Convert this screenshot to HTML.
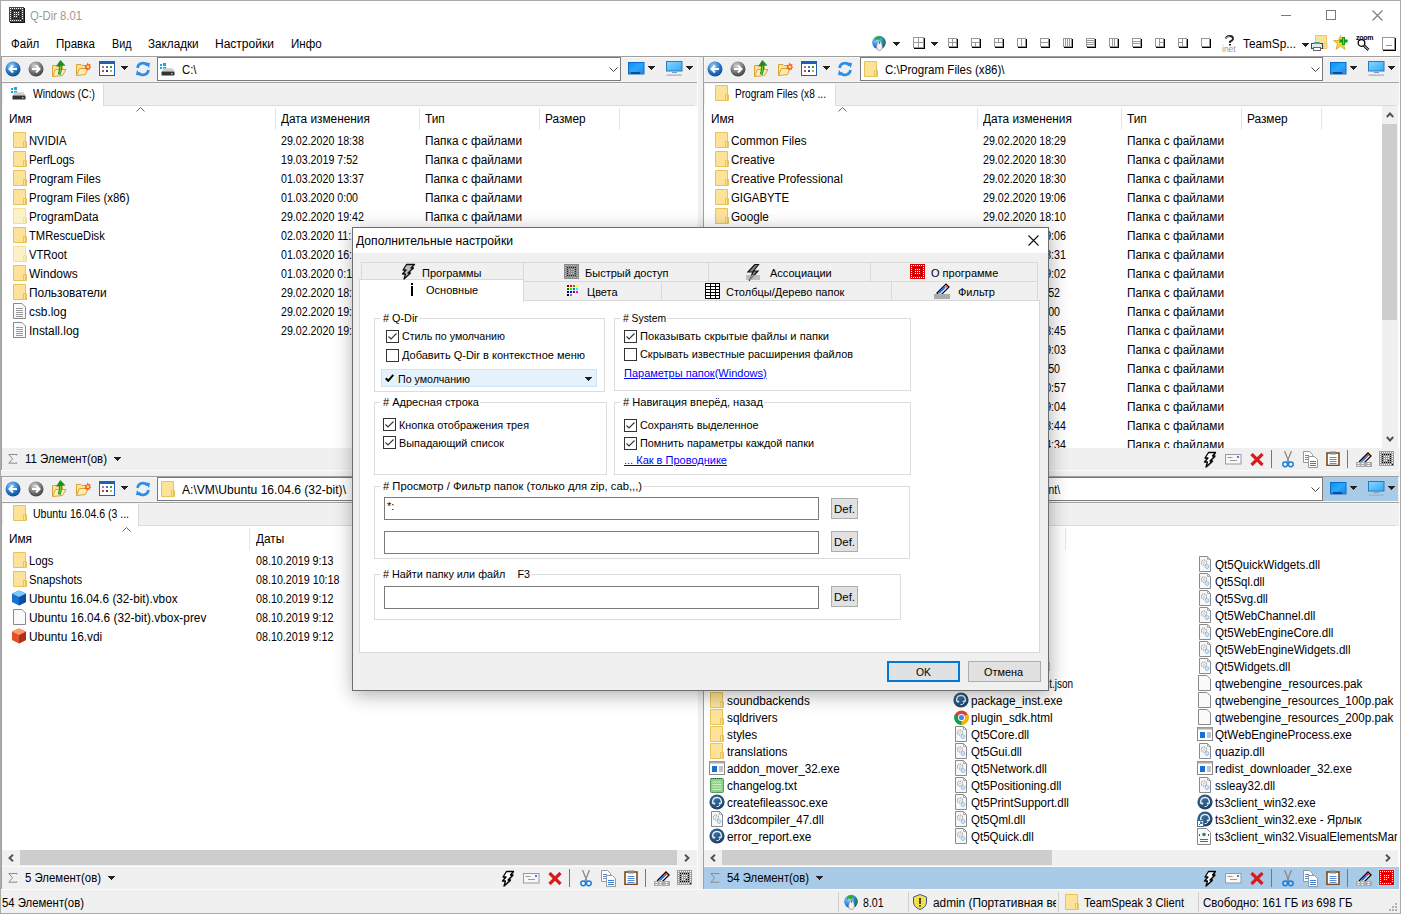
<!DOCTYPE html><html><head><meta charset="utf-8"><style>html,body{margin:0;padding:0;}body{width:1401px;height:914px;overflow:hidden;position:relative;background:#f0f0f0;font-family:"Liberation Sans",sans-serif;}body div,body svg{position:absolute;}.t{white-space:pre;}</style></head><body><div style="left:0px;top:0px;width:1401px;height:914px;background:#f0f0f0;"></div><div style="left:0px;top:0px;width:1401px;height:56px;background:#fff;"></div><div style="left:0px;top:0px;width:1401px;height:1px;background:#aaaaaa;"></div><div style="left:0px;top:0px;width:1px;height:914px;background:#aaaaaa;"></div><div style="left:1400px;top:0px;width:1px;height:914px;background:#aaaaaa;"></div><div style="left:0px;top:913px;width:1401px;height:1px;background:#aaaaaa;"></div><svg style="left:9px;top:7px" width="17" height="17" viewBox="0 0 17 17" shape-rendering="crispEdges"><rect x="1" y="1" width="15" height="15" fill="#111"/><rect x="0" y="0" width="15" height="15" fill="#ee0000"/><rect x="1" y="1" width="1" height="1" fill="#fff"/><rect x="3" y="1" width="1" height="1" fill="#fff"/><rect x="5" y="1" width="1" height="1" fill="#fff"/><rect x="7" y="1" width="1" height="1" fill="#fff"/><rect x="9" y="1" width="1" height="1" fill="#fff"/><rect x="11" y="1" width="1" height="1" fill="#fff"/><rect x="13" y="1" width="1" height="1" fill="#fff"/><rect x="1" y="3" width="1" height="1" fill="#fff"/><rect x="3" y="3" width="1" height="1" fill="#000"/><rect x="5" y="3" width="1" height="1" fill="#000"/><rect x="7" y="3" width="1" height="1" fill="#000"/><rect x="9" y="3" width="1" height="1" fill="#000"/><rect x="11" y="3" width="1" height="1" fill="#000"/><rect x="13" y="3" width="1" height="1" fill="#fff"/><rect x="1" y="5" width="1" height="1" fill="#fff"/><rect x="3" y="5" width="1" height="1" fill="#000"/><rect x="5" y="5" width="1" height="1" fill="#fff"/><rect x="7" y="5" width="1" height="1" fill="#fff"/><rect x="9" y="5" width="1" height="1" fill="#fff"/><rect x="11" y="5" width="1" height="1" fill="#000"/><rect x="13" y="5" width="1" height="1" fill="#fff"/><rect x="1" y="7" width="1" height="1" fill="#fff"/><rect x="3" y="7" width="1" height="1" fill="#000"/><rect x="5" y="7" width="1" height="1" fill="#fff"/><rect x="7" y="7" width="1" height="1" fill="#fff"/><rect x="9" y="7" width="1" height="1" fill="#fff"/><rect x="11" y="7" width="1" height="1" fill="#000"/><rect x="13" y="7" width="1" height="1" fill="#fff"/><rect x="1" y="9" width="1" height="1" fill="#fff"/><rect x="3" y="9" width="1" height="1" fill="#000"/><rect x="5" y="9" width="1" height="1" fill="#fff"/><rect x="7" y="9" width="1" height="1" fill="#fff"/><rect x="9" y="9" width="1" height="1" fill="#000"/><rect x="11" y="9" width="1" height="1" fill="#000"/><rect x="13" y="9" width="1" height="1" fill="#fff"/><rect x="1" y="11" width="1" height="1" fill="#fff"/><rect x="3" y="11" width="1" height="1" fill="#000"/><rect x="5" y="11" width="1" height="1" fill="#000"/><rect x="7" y="11" width="1" height="1" fill="#000"/><rect x="9" y="11" width="1" height="1" fill="#000"/><rect x="11" y="11" width="1" height="1" fill="#000"/><rect x="13" y="11" width="1" height="1" fill="#fff"/><rect x="1" y="13" width="1" height="1" fill="#fff"/><rect x="3" y="13" width="1" height="1" fill="#fff"/><rect x="5" y="13" width="1" height="1" fill="#fff"/><rect x="7" y="13" width="1" height="1" fill="#fff"/><rect x="9" y="13" width="1" height="1" fill="#fff"/><rect x="11" y="13" width="1" height="1" fill="#fff"/><rect x="13" y="13" width="1" height="1" fill="#000"/></svg><div class="t" style="left:30px;top:7.84px;font-size:12px;line-height:16px;color:#9a9a9a;transform:scaleX(0.9393);transform-origin:0 0;">Q-Dir 8.01</div><div style="left:1281px;top:15px;width:10px;height:1px;background:#7a7a7a;"></div><div style="left:1326px;top:10px;width:10px;height:10px;border:1px solid #7a7a7a;box-sizing:border-box;"></div><svg style="left:1372px;top:10px" width="11" height="11" viewBox="0 0 11 11"><path d="M0.5 0.5L10.5 10.5M10.5 0.5L0.5 10.5" stroke="#7a7a7a" stroke-width="1.1"/></svg><div class="t" style="left:11px;top:35.84px;font-size:12px;line-height:16px;color:#000;transform:scaleX(0.9588);transform-origin:0 0;">Файл</div><div class="t" style="left:56px;top:35.84px;font-size:12px;line-height:16px;color:#000;transform:scaleX(0.9594);transform-origin:0 0;">Правка</div><div class="t" style="left:112px;top:35.84px;font-size:12px;line-height:16px;color:#000;transform:scaleX(0.8978);transform-origin:0 0;">Вид</div><div class="t" style="left:148px;top:35.84px;font-size:12px;line-height:16px;color:#000;transform:scaleX(0.9742);transform-origin:0 0;">Закладки</div><div class="t" style="left:215px;top:35.84px;font-size:12px;line-height:16px;color:#000;transform:scaleX(1.0010);transform-origin:0 0;">Настройки</div><div class="t" style="left:291px;top:35.84px;font-size:12px;line-height:16px;color:#000;transform:scaleX(0.9650);transform-origin:0 0;">Инфо</div><svg style="left:872px;top:35px" width="15" height="16" viewBox="0 0 15 16"><defs><radialGradient id="globeg" cx="0.35" cy="0.3" r="0.75"><stop offset="0" stop-color="#9ad8ff"/><stop offset="0.7" stop-color="#1a78d8"/><stop offset="1" stop-color="#0a4a9a"/></radialGradient></defs><circle cx="7" cy="7.5" r="6.8" fill="url(#globeg)"/><path d="M2.5 3.5Q5 0.8 8.5 1.2L9.5 3L7 5L4.5 4.5L3 6Z" fill="#2fa82f"/><path d="M10.5 2.5Q13.5 4.5 13.6 8L12 10L10.5 7.5L11.5 5Z" fill="#1f8f2a"/><path d="M5.5 7.5Q7.5 5.5 9.5 7.5L10.5 12Q10 15.5 7.5 15.5Q4.5 15.5 4.5 12Z" fill="#f2f2f2" stroke="#8a8a8a" stroke-width="0.7"/><path d="M7.5 6.5V9" stroke="#6a6aa0" stroke-width="1"/></svg><svg style="left:893px;top:42px" width="7" height="4" viewBox="0 0 7 4" shape-rendering="crispEdges"><rect x="0" y="0" width="7" height="1" fill="#222"/><rect x="1" y="1" width="5" height="1" fill="#222"/><rect x="2" y="2" width="3" height="1" fill="#222"/><rect x="3" y="3" width="1" height="1" fill="#222"/></svg><svg style="left:913px;top:37px" width="12" height="12" viewBox="0 0 12 12" shape-rendering="crispEdges"><rect x="1" y="1" width="11" height="11" fill="#000"/><rect x="0" y="0" width="11" height="11" fill="#999"/><rect x="1" y="1" width="9" height="9" fill="#fff"/><rect x="5" y="0" width="1" height="11" fill="#999"/><rect x="0" y="5" width="11" height="1" fill="#999"/></svg><svg style="left:931px;top:42px" width="7" height="4" viewBox="0 0 7 4" shape-rendering="crispEdges"><rect x="0" y="0" width="7" height="1" fill="#222"/><rect x="1" y="1" width="5" height="1" fill="#222"/><rect x="2" y="2" width="3" height="1" fill="#222"/><rect x="3" y="3" width="1" height="1" fill="#222"/></svg><svg style="left:948px;top:38px" width="10" height="10" viewBox="0 0 10 10" shape-rendering="crispEdges"><rect x="1" y="1" width="9" height="9" fill="#000"/><rect x="0" y="0" width="9" height="9" fill="#999"/><rect x="1" y="1" width="7" height="7" fill="#fff"/><rect x="4" y="0" width="1" height="9" fill="#999"/><rect x="0" y="4" width="9" height="1" fill="#999"/></svg><svg style="left:971px;top:38px" width="10" height="10" viewBox="0 0 10 10" shape-rendering="crispEdges"><rect x="1" y="1" width="9" height="9" fill="#000"/><rect x="0" y="0" width="9" height="9" fill="#999"/><rect x="1" y="1" width="7" height="7" fill="#fff"/><rect x="0" y="4" width="9" height="1" fill="#999"/><rect x="4" y="4" width="1" height="5" fill="#999"/></svg><svg style="left:994px;top:38px" width="10" height="10" viewBox="0 0 10 10" shape-rendering="crispEdges"><rect x="1" y="1" width="9" height="9" fill="#000"/><rect x="0" y="0" width="9" height="9" fill="#999"/><rect x="1" y="1" width="7" height="7" fill="#fff"/><rect x="0" y="4" width="9" height="1" fill="#999"/><rect x="4" y="0" width="1" height="5" fill="#999"/></svg><svg style="left:1017px;top:38px" width="10" height="10" viewBox="0 0 10 10" shape-rendering="crispEdges"><rect x="1" y="1" width="9" height="9" fill="#000"/><rect x="0" y="0" width="9" height="9" fill="#999"/><rect x="1" y="1" width="7" height="7" fill="#fff"/><rect x="4" y="0" width="1" height="9" fill="#999"/></svg><svg style="left:1040px;top:38px" width="10" height="10" viewBox="0 0 10 10" shape-rendering="crispEdges"><rect x="1" y="1" width="9" height="9" fill="#000"/><rect x="0" y="0" width="9" height="9" fill="#999"/><rect x="1" y="1" width="7" height="7" fill="#fff"/><rect x="0" y="4" width="9" height="1" fill="#999"/></svg><svg style="left:1063px;top:38px" width="10" height="10" viewBox="0 0 10 10" shape-rendering="crispEdges"><rect x="1" y="1" width="9" height="9" fill="#000"/><rect x="0" y="0" width="9" height="9" fill="#999"/><rect x="1" y="1" width="7" height="7" fill="#fff"/><rect x="2" y="0" width="1" height="9" fill="#999"/><rect x="4" y="0" width="1" height="9" fill="#999"/><rect x="6" y="0" width="1" height="9" fill="#999"/></svg><svg style="left:1086px;top:38px" width="10" height="10" viewBox="0 0 10 10" shape-rendering="crispEdges"><rect x="1" y="1" width="9" height="9" fill="#000"/><rect x="0" y="0" width="9" height="9" fill="#999"/><rect x="1" y="1" width="7" height="7" fill="#fff"/><rect x="0" y="2" width="9" height="1" fill="#999"/><rect x="0" y="4" width="9" height="1" fill="#999"/><rect x="0" y="6" width="9" height="1" fill="#999"/></svg><svg style="left:1109px;top:38px" width="10" height="10" viewBox="0 0 10 10" shape-rendering="crispEdges"><rect x="1" y="1" width="9" height="9" fill="#000"/><rect x="0" y="0" width="9" height="9" fill="#999"/><rect x="1" y="1" width="7" height="7" fill="#fff"/><rect x="3" y="0" width="1" height="9" fill="#999"/><rect x="5" y="0" width="1" height="9" fill="#999"/></svg><svg style="left:1132px;top:38px" width="10" height="10" viewBox="0 0 10 10" shape-rendering="crispEdges"><rect x="1" y="1" width="9" height="9" fill="#000"/><rect x="0" y="0" width="9" height="9" fill="#999"/><rect x="1" y="1" width="7" height="7" fill="#fff"/><rect x="0" y="3" width="9" height="1" fill="#999"/><rect x="0" y="5" width="9" height="1" fill="#999"/></svg><svg style="left:1155px;top:38px" width="10" height="10" viewBox="0 0 10 10" shape-rendering="crispEdges"><rect x="1" y="1" width="9" height="9" fill="#000"/><rect x="0" y="0" width="9" height="9" fill="#999"/><rect x="1" y="1" width="7" height="7" fill="#fff"/><rect x="4" y="0" width="1" height="9" fill="#999"/><rect x="4" y="4" width="5" height="1" fill="#999"/></svg><svg style="left:1178px;top:38px" width="10" height="10" viewBox="0 0 10 10" shape-rendering="crispEdges"><rect x="1" y="1" width="9" height="9" fill="#000"/><rect x="0" y="0" width="9" height="9" fill="#999"/><rect x="1" y="1" width="7" height="7" fill="#fff"/><rect x="4" y="0" width="1" height="9" fill="#999"/><rect x="0" y="4" width="5" height="1" fill="#999"/></svg><svg style="left:1201px;top:38px" width="10" height="10" viewBox="0 0 10 10" shape-rendering="crispEdges"><rect x="1" y="1" width="9" height="9" fill="#000"/><rect x="0" y="0" width="9" height="9" fill="#999"/><rect x="1" y="1" width="7" height="7" fill="#fff"/></svg><svg style="left:1221px;top:35px" width="18" height="17" viewBox="0 0 18 17"><path d="M5 3.5Q5 1 8.5 1Q12 1 12 3.5Q12 5.5 9 6.5V8" stroke="#222" stroke-width="1.8" fill="none"/><path d="M5.5 3Q6 1.5 8.5 1.5" stroke="#aaa" stroke-width="1.2" fill="none"/><rect x="8" y="9" width="2" height="1.5" fill="#222"/><text x="1" y="16.5" font-size="8.5" fill="#999" font-family="Liberation Sans">inet</text></svg><div class="t" style="left:1243px;top:35.84px;font-size:12px;line-height:16px;color:#000;transform:scaleX(0.9809);transform-origin:0 0;">TeamSp...</div><svg style="left:1302px;top:43px" width="7" height="4" viewBox="0 0 7 4" shape-rendering="crispEdges"><rect x="0" y="0" width="7" height="1" fill="#222"/><rect x="1" y="1" width="5" height="1" fill="#222"/><rect x="2" y="2" width="3" height="1" fill="#222"/><rect x="3" y="3" width="1" height="1" fill="#222"/></svg><svg style="left:1311px;top:35px" width="17" height="16" viewBox="0 0 17 16"><path d="M4.5 0.5H15.5V13.5H4.5Z" fill="#fbe29a" stroke="#e8c86a"/><path d="M13 8.5H16V13.5H13Z" fill="#fbe29a" stroke="#e8c86a"/><rect x="0.5" y="8.5" width="11" height="5" fill="#e8e8e8" stroke="#444"/><rect x="3" y="7" width="6" height="2" fill="#3aa0f0"/><rect x="5" y="7" width="2" height="2" fill="#22bb44"/><rect x="2.5" y="12.5" width="7" height="3" fill="#fff" stroke="#666"/></svg><svg style="left:1333px;top:35px" width="17" height="16" viewBox="0 0 17 16"><path d="M7.5 0.5L9.5 5.5H14.5L10.5 8.8L12 14.5L7.5 11.2L3 14.5L4.5 8.8L0.5 5.5H5.5Z" fill="#f7d436" stroke="#d4a820" stroke-width="0.8"/><rect x="9" y="2" width="3" height="8" fill="#119911"/><rect x="6.5" y="4.5" width="8" height="3" fill="#119911"/><rect x="10" y="3" width="1" height="6" fill="#55dd55"/></svg><svg style="left:1356px;top:34px" width="18" height="18" viewBox="0 0 18 18"><text x="0" y="5.5" font-size="7" font-weight="bold" fill="#000" font-family="Liberation Sans" letter-spacing="-0.3">zoom</text><circle cx="5.5" cy="9" r="3.3" fill="#fff" stroke="#000" stroke-width="1.3"/><path d="M8 11.5L12.5 16" stroke="#000" stroke-width="2.6"/><path d="M8 11.5L12.5 16" stroke="#fff" stroke-width="1"/></svg><svg style="left:1382px;top:37px" width="14" height="14" viewBox="0 0 14 14" shape-rendering="crispEdges"><rect x="1" y="1" width="13" height="13" fill="#000"/><rect x="0" y="0" width="13" height="13" fill="#999"/><rect x="1" y="1" width="11" height="11" fill="#fff"/><rect x="4" y="8" width="6" height="1" fill="#999"/></svg><div style="left:1px;top:56px;width:1399px;height:1px;background:#a0a0a0;"></div><div style="left:697px;top:57px;width:6px;height:856px;background:#f0f0f0;"></div><div style="left:697px;top:57px;width:1px;height:832px;background:#fdfdfd;"></div><div style="left:1399px;top:57px;width:1px;height:832px;background:#fdfdfd;"></div><div style="left:1px;top:470px;width:1399px;height:6px;background:#f0f0f0;"></div><div style="left:1px;top:470px;width:1399px;height:1px;background:#fbfbfb;"></div><div style="left:1px;top:56px;width:696px;height:1px;background:#a0a0a0;"></div><div style="left:1px;top:56px;width:1px;height:414px;background:#a0a0a0;"></div><div style="left:2px;top:57px;width:695px;height:1px;background:#f8f8f8;"></div><div style="left:2px;top:57px;width:1px;height:413px;background:#f8f8f8;"></div><div style="left:3px;top:58px;width:694px;height:24px;background:#f0f0f0;"></div><svg style="left:5px;top:61px" width="16" height="16" viewBox="0 0 16 16"><defs><radialGradient id="gb" cx="0.4" cy="0.3" r="0.8"><stop offset="0" stop-color="#8fd0ff"/><stop offset="0.6" stop-color="#1f6fc0"/><stop offset="1" stop-color="#0b3f80"/></radialGradient><radialGradient id="gg" cx="0.4" cy="0.3" r="0.8"><stop offset="0" stop-color="#d8d8d8"/><stop offset="0.6" stop-color="#6a6a6a"/><stop offset="1" stop-color="#333"/></radialGradient></defs><circle cx="8" cy="8" r="7.5" fill="url(#gb)"/><path d="M12 8H5M8 4.5L4.5 8L8 11.5" stroke="#fff" stroke-width="2" fill="none"/></svg><svg style="left:28px;top:61px" width="16" height="16" viewBox="0 0 16 16"><circle cx="8" cy="8" r="7.5" fill="url(#gg)"/><path d="M4 8H11M8 4.5L11.5 8L8 11.5" stroke="#fff" stroke-width="2" fill="none"/></svg><svg style="left:51px;top:59px" width="16" height="19" viewBox="0 0 16 19"><path d="M1.5 17.5V6.5H6L7 7.5H11.5V10" fill="#fbe39a" stroke="#d8a436"/><path d="M1.5 17.5L4.5 10.5H15L11.5 16.5Z" fill="#fdeeb5" stroke="#d8a436"/><path d="M8.2 15.5Q10 11 9.3 6" stroke="#1e8c1e" stroke-width="3" fill="none"/><path d="M8.6 15Q9.8 11 9.4 7" stroke="#6ad84a" stroke-width="1" fill="none"/><path d="M5 7.5L9.3 1L14.5 6.5Z" fill="#1e8c1e"/></svg><svg style="left:75px;top:61px" width="17" height="16" viewBox="0 0 17 16"><path d="M1.5 14.5V3.5H6L7 4.5H11.5V7" fill="#fbe39a" stroke="#d8a436"/><path d="M1.5 14.5L4.5 7.5H13L10.5 13.5Z" fill="#fdeeb5" stroke="#d8a436"/><path d="M12.8 1.5L13.6 3.5L15.6 3L14.8 5L16.5 6.2L14.6 7L15 9L13 8.2L11.8 9.8L11.2 7.8L9.2 7.6L10.5 6L9.3 4.3L11.4 4.2Z" fill="#ff4a10"/><circle cx="12.9" cy="5.8" r="1.5" fill="#ffe060"/></svg><svg style="left:99px;top:61px" width="16" height="15" viewBox="0 0 16 15"><rect x="0.5" y="0.5" width="15" height="14" fill="#fff" stroke="#1f5fb8"/><rect x="0.5" y="0.5" width="15" height="2.5" fill="#1f5fb8"/><rect x="3" y="5" width="2" height="2" fill="#88a"/><rect x="7" y="5" width="2" height="2" fill="#66c"/><rect x="11" y="5" width="2" height="2" fill="#2a2"/><rect x="3" y="9" width="2" height="2" fill="#e33"/><rect x="7" y="9" width="2" height="2" fill="#23a"/><rect x="11" y="9" width="2" height="2" fill="#ca3"/></svg><svg style="left:121px;top:66px" width="7" height="4" viewBox="0 0 7 4" shape-rendering="crispEdges"><rect x="0" y="0" width="7" height="1" fill="#222"/><rect x="1" y="1" width="5" height="1" fill="#222"/><rect x="2" y="2" width="3" height="1" fill="#222"/><rect x="3" y="3" width="1" height="1" fill="#222"/></svg><svg style="left:135px;top:61px" width="16" height="16" viewBox="0 0 16 16"><path d="M2.5 7A5.5 5.5 0 0 1 12.5 4.5" stroke="#2a8ee8" stroke-width="2.6" fill="none"/><path d="M10 1.5L15 2L14 7Z" fill="#2a8ee8"/><path d="M13.5 9A5.5 5.5 0 0 1 3.5 11.5" stroke="#2a8ee8" stroke-width="2.6" fill="none"/><path d="M6 14.5L1 14L2 9Z" fill="#2a8ee8"/></svg><div style="left:157px;top:57px;width:464px;height:24px;background:#fff;border:1px solid #7a7a7a;box-sizing:border-box;"></div><svg style="left:160px;top:63px" width="16" height="14" viewBox="0 0 16 14"><rect x="0" y="1" width="2" height="2" fill="#12aaf0"/><rect x="3" y="0" width="3" height="3" fill="#12aaf0"/><rect x="0" y="4" width="2" height="2" fill="#12aaf0"/><rect x="3" y="4" width="3" height="3" fill="#12aaf0"/><path d="M1.8 8.5L3.2 5.2H12.8L14.3 8.5Z" fill="#cfcfcf"/><rect x="1.5" y="8.5" width="13" height="4" rx="0.6" fill="#343434"/><rect x="11" y="10" width="1.6" height="1.4" fill="#44ff44"/></svg><div class="t" style="left:182px;top:61.84px;font-size:12px;line-height:16px;color:#000;transform:scaleX(0.9401);transform-origin:0 0;">C:\</div><svg style="left:609px;top:67px" width="9" height="5" viewBox="0 0 9 5"><path d="M0.5 0.5L4.5 4.5L8.5 0.5" stroke="#444" fill="none"/></svg><svg style="left:628px;top:62px" width="17" height="13" viewBox="0 0 17 13"><defs><linearGradient id="mon1" x1="0" y1="0" x2="1" y2="1"><stop offset="0" stop-color="#0a8ef4"/><stop offset="0.5" stop-color="#2aa8ff"/><stop offset="1" stop-color="#0a8ef4"/></linearGradient></defs><rect x="0.5" y="0.5" width="15.5" height="11.5" fill="url(#mon1)" stroke="#0b6cc8"/><rect x="1" y="10" width="15" height="2" fill="#0b4f98"/><rect x="1.5" y="10.5" width="1" height="1" fill="#fff"/><rect x="12.5" y="10.5" width="1" height="1" fill="#fff"/><rect x="14.5" y="10.5" width="1" height="1" fill="#fff"/></svg><svg style="left:648px;top:66px" width="7" height="4" viewBox="0 0 7 4" shape-rendering="crispEdges"><rect x="0" y="0" width="7" height="1" fill="#222"/><rect x="1" y="1" width="5" height="1" fill="#222"/><rect x="2" y="2" width="3" height="1" fill="#222"/><rect x="3" y="3" width="1" height="1" fill="#222"/></svg><svg style="left:666px;top:61px" width="17" height="15" viewBox="0 0 17 15"><defs><linearGradient id="mon2" x1="0" y1="0" x2="1" y2="1"><stop offset="0" stop-color="#8ed4ff"/><stop offset="0.5" stop-color="#5cc0ff"/><stop offset="1" stop-color="#3aa8f0"/></linearGradient></defs><rect x="0.5" y="0.5" width="15.5" height="9.5" fill="url(#mon2)" stroke="#2a7ab8"/><rect x="6" y="11" width="5" height="1" fill="#7a9ac0"/><rect x="0.5" y="13.5" width="15.5" height="1.2" fill="#9ab0c8"/></svg><svg style="left:686px;top:66px" width="7" height="4" viewBox="0 0 7 4" shape-rendering="crispEdges"><rect x="0" y="0" width="7" height="1" fill="#222"/><rect x="1" y="1" width="5" height="1" fill="#222"/><rect x="2" y="2" width="3" height="1" fill="#222"/><rect x="3" y="3" width="1" height="1" fill="#222"/></svg><div style="left:2px;top:82px;width:695px;height:1px;background:#a0a0a0;"></div><div style="left:2px;top:81px;width:695px;height:1px;background:#f8f8f8;"></div><div style="left:2px;top:83px;width:695px;height:22px;background:#f0f0f0;"></div><div style="left:2px;top:83px;width:695px;height:1px;background:#f6f6f6;"></div><div style="left:3px;top:84px;width:100px;height:22px;background:#fff;"></div><div style="left:103px;top:84px;width:1px;height:22px;background:#dcdcdc;"></div><div style="left:104px;top:105px;width:590px;height:1px;background:#dadada;"></div><svg style="left:11px;top:87px" width="16" height="14" viewBox="0 0 16 14"><rect x="0" y="1" width="2" height="2" fill="#12aaf0"/><rect x="3" y="0" width="3" height="3" fill="#12aaf0"/><rect x="0" y="4" width="2" height="2" fill="#12aaf0"/><rect x="3" y="4" width="3" height="3" fill="#12aaf0"/><path d="M1.8 8.5L3.2 5.2H12.8L14.3 8.5Z" fill="#cfcfcf"/><rect x="1.5" y="8.5" width="13" height="4" rx="0.6" fill="#343434"/><rect x="11" y="10" width="1.6" height="1.4" fill="#44ff44"/></svg><div class="t" style="left:33px;top:85.84px;font-size:12px;line-height:16px;color:#000;transform:scaleX(0.8609);transform-origin:0 0;">Windows (C:)</div><div style="left:2px;top:106px;width:695px;height:342px;background:#fff;"></div><div style="left:2px;top:448px;width:695px;height:22px;background:#f0f0f0;"></div><div class="t" style="left:9px;top:110.84px;font-size:12px;line-height:16px;color:#000;transform:scaleX(0.9850);transform-origin:0 0;">Имя</div><div class="t" style="left:281px;top:110.84px;font-size:12px;line-height:16px;color:#000;transform:scaleX(0.9850);transform-origin:0 0;">Дата изменения</div><div class="t" style="left:425px;top:110.84px;font-size:12px;line-height:16px;color:#000;transform:scaleX(0.9850);transform-origin:0 0;">Тип</div><div class="t" style="left:545px;top:110.84px;font-size:12px;line-height:16px;color:#000;transform:scaleX(0.9850);transform-origin:0 0;">Размер</div><div style="left:275px;top:108px;width:1px;height:22px;background:#e5e5e5;"></div><div style="left:419px;top:108px;width:1px;height:22px;background:#e5e5e5;"></div><div style="left:539px;top:108px;width:1px;height:22px;background:#e5e5e5;"></div><div style="left:619px;top:108px;width:1px;height:22px;background:#e5e5e5;"></div><svg style="left:136px;top:107px" width="9" height="5" viewBox="0 0 9 5"><path d="M0.5 4.5L4.5 0.5L8.5 4.5" stroke="#666" fill="none"/></svg><svg style="left:13px;top:132px" width="14" height="16" viewBox="0 0 14 16"><path d="M0.5 0.5H12.5V9.5H13.5V15.5H0.5Z" fill="#fde39a" stroke="#e8c35a"/><path d="M10.5 9.5H12.5V15.5H10.5Z" fill="#fde39a" stroke="#e8c35a"/></svg><div class="t" style="left:29px;top:132.84px;font-size:12px;line-height:16px;color:#000;transform:scaleX(0.9371);transform-origin:0 0;">NVIDIA</div><div class="t" style="left:281px;top:132.84px;font-size:12px;line-height:16px;color:#000;transform:scaleX(0.8876);transform-origin:0 0;">29.02.2020 18:38</div><div class="t" style="left:425px;top:132.84px;font-size:12px;line-height:16px;color:#000;transform:scaleX(0.9845);transform-origin:0 0;">Папка с файлами</div><svg style="left:13px;top:151px" width="14" height="16" viewBox="0 0 14 16"><path d="M0.5 0.5H12.5V9.5H13.5V15.5H0.5Z" fill="#fde39a" stroke="#e8c35a"/><path d="M10.5 9.5H12.5V15.5H10.5Z" fill="#fde39a" stroke="#e8c35a"/></svg><div class="t" style="left:29px;top:151.84px;font-size:12px;line-height:16px;color:#000;transform:scaleX(0.9473);transform-origin:0 0;">PerfLogs</div><div class="t" style="left:281px;top:151.84px;font-size:12px;line-height:16px;color:#000;transform:scaleX(0.8877);transform-origin:0 0;">19.03.2019 7:52</div><div class="t" style="left:425px;top:151.84px;font-size:12px;line-height:16px;color:#000;transform:scaleX(0.9845);transform-origin:0 0;">Папка с файлами</div><svg style="left:13px;top:170px" width="14" height="16" viewBox="0 0 14 16"><path d="M0.5 0.5H12.5V9.5H13.5V15.5H0.5Z" fill="#fde39a" stroke="#e8c35a"/><path d="M10.5 9.5H12.5V15.5H10.5Z" fill="#fde39a" stroke="#e8c35a"/></svg><div class="t" style="left:29px;top:170.84px;font-size:12px;line-height:16px;color:#000;transform:scaleX(0.9600);transform-origin:0 0;">Program Files</div><div class="t" style="left:281px;top:170.84px;font-size:12px;line-height:16px;color:#000;transform:scaleX(0.8876);transform-origin:0 0;">01.03.2020 13:37</div><div class="t" style="left:425px;top:170.84px;font-size:12px;line-height:16px;color:#000;transform:scaleX(0.9845);transform-origin:0 0;">Папка с файлами</div><svg style="left:13px;top:189px" width="14" height="16" viewBox="0 0 14 16"><path d="M0.5 0.5H12.5V9.5H13.5V15.5H0.5Z" fill="#fde39a" stroke="#e8c35a"/><path d="M10.5 9.5H12.5V15.5H10.5Z" fill="#fde39a" stroke="#e8c35a"/></svg><div class="t" style="left:29px;top:189.84px;font-size:12px;line-height:16px;color:#000;transform:scaleX(0.9539);transform-origin:0 0;">Program Files (x86)</div><div class="t" style="left:281px;top:189.84px;font-size:12px;line-height:16px;color:#000;transform:scaleX(0.8877);transform-origin:0 0;">01.03.2020 0:00</div><div class="t" style="left:425px;top:189.84px;font-size:12px;line-height:16px;color:#000;transform:scaleX(0.9845);transform-origin:0 0;">Папка с файлами</div><svg style="left:13px;top:208px" width="14" height="16" viewBox="0 0 14 16"><path d="M0.5 0.5H12.5V9.5H13.5V15.5H0.5Z" fill="#fdf1c6" stroke="#f2deA0"/><path d="M10.5 9.5H12.5V15.5H10.5Z" fill="#fdf1c6" stroke="#f2deA0"/></svg><div class="t" style="left:29px;top:208.84px;font-size:12px;line-height:16px;color:#000;transform:scaleX(0.9723);transform-origin:0 0;">ProgramData</div><div class="t" style="left:281px;top:208.84px;font-size:12px;line-height:16px;color:#000;transform:scaleX(0.8876);transform-origin:0 0;">29.02.2020 19:42</div><div class="t" style="left:425px;top:208.84px;font-size:12px;line-height:16px;color:#000;transform:scaleX(0.9845);transform-origin:0 0;">Папка с файлами</div><svg style="left:13px;top:227px" width="14" height="16" viewBox="0 0 14 16"><path d="M0.5 0.5H12.5V9.5H13.5V15.5H0.5Z" fill="#fde39a" stroke="#e8c35a"/><path d="M10.5 9.5H12.5V15.5H10.5Z" fill="#fde39a" stroke="#e8c35a"/></svg><div class="t" style="left:29px;top:227.84px;font-size:12px;line-height:16px;color:#000;transform:scaleX(0.9317);transform-origin:0 0;">TMRescueDisk</div><div class="t" style="left:281px;top:227.84px;font-size:12px;line-height:16px;color:#000;transform:scaleX(0.8866);transform-origin:0 0;">02.03.2020 11:18</div><div class="t" style="left:425px;top:227.84px;font-size:12px;line-height:16px;color:#000;transform:scaleX(0.9845);transform-origin:0 0;">Папка с файлами</div><svg style="left:13px;top:246px" width="14" height="16" viewBox="0 0 14 16"><path d="M0.5 0.5H12.5V9.5H13.5V15.5H0.5Z" fill="#fdf1c6" stroke="#f2deA0"/><path d="M10.5 9.5H12.5V15.5H10.5Z" fill="#fdf1c6" stroke="#f2deA0"/></svg><div class="t" style="left:29px;top:246.84px;font-size:12px;line-height:16px;color:#000;transform:scaleX(0.9315);transform-origin:0 0;">VTRoot</div><div class="t" style="left:281px;top:246.84px;font-size:12px;line-height:16px;color:#000;transform:scaleX(0.8876);transform-origin:0 0;">01.03.2020 16:05</div><div class="t" style="left:425px;top:246.84px;font-size:12px;line-height:16px;color:#000;transform:scaleX(0.9845);transform-origin:0 0;">Папка с файлами</div><svg style="left:13px;top:265px" width="14" height="16" viewBox="0 0 14 16"><path d="M0.5 0.5H12.5V9.5H13.5V15.5H0.5Z" fill="#fde39a" stroke="#e8c35a"/><path d="M10.5 9.5H12.5V15.5H10.5Z" fill="#fde39a" stroke="#e8c35a"/></svg><div class="t" style="left:29px;top:265.84px;font-size:12px;line-height:16px;color:#000;transform:scaleX(1.0003);transform-origin:0 0;">Windows</div><div class="t" style="left:281px;top:265.84px;font-size:12px;line-height:16px;color:#000;transform:scaleX(0.8877);transform-origin:0 0;">01.03.2020 0:12</div><div class="t" style="left:425px;top:265.84px;font-size:12px;line-height:16px;color:#000;transform:scaleX(0.9845);transform-origin:0 0;">Папка с файлами</div><svg style="left:13px;top:284px" width="14" height="16" viewBox="0 0 14 16"><path d="M0.5 0.5H12.5V9.5H13.5V15.5H0.5Z" fill="#fde39a" stroke="#e8c35a"/><path d="M10.5 9.5H12.5V15.5H10.5Z" fill="#fde39a" stroke="#e8c35a"/></svg><div class="t" style="left:29px;top:284.84px;font-size:12px;line-height:16px;color:#000;transform:scaleX(0.9920);transform-origin:0 0;">Пользователи</div><div class="t" style="left:281px;top:284.84px;font-size:12px;line-height:16px;color:#000;transform:scaleX(0.8876);transform-origin:0 0;">29.02.2020 18:36</div><div class="t" style="left:425px;top:284.84px;font-size:12px;line-height:16px;color:#000;transform:scaleX(0.9845);transform-origin:0 0;">Папка с файлами</div><svg style="left:13px;top:303px" width="13" height="16" viewBox="0 0 13 16"><path d="M0.5 0.5H9L12.5 4V15.5H0.5Z" fill="#fafafa" stroke="#8a8a8a"/><path d="M3 5.5H10M3 7.5H10M3 9.5H10M3 11.5H10M3 13.5H10" stroke="#9a9a9a"/></svg><div class="t" style="left:29px;top:303.84px;font-size:12px;line-height:16px;color:#000;transform:scaleX(0.9860);transform-origin:0 0;">csb.log</div><div class="t" style="left:281px;top:303.84px;font-size:12px;line-height:16px;color:#000;transform:scaleX(0.8876);transform-origin:0 0;">29.02.2020 19:40</div><div class="t" style="left:425px;top:303.84px;font-size:12px;line-height:16px;color:#000;transform:scaleX(0.9850);transform-origin:0 0;">Текстовый документ</div><svg style="left:13px;top:322px" width="13" height="16" viewBox="0 0 13 16"><path d="M0.5 0.5H9L12.5 4V15.5H0.5Z" fill="#fafafa" stroke="#8a8a8a"/><path d="M3 5.5H10M3 7.5H10M3 9.5H10M3 11.5H10M3 13.5H10" stroke="#9a9a9a"/></svg><div class="t" style="left:29px;top:322.84px;font-size:12px;line-height:16px;color:#000;transform:scaleX(0.9881);transform-origin:0 0;">Install.log</div><div class="t" style="left:281px;top:322.84px;font-size:12px;line-height:16px;color:#000;transform:scaleX(0.8876);transform-origin:0 0;">29.02.2020 19:41</div><div class="t" style="left:425px;top:322.84px;font-size:12px;line-height:16px;color:#000;transform:scaleX(0.9850);transform-origin:0 0;">Текстовый документ</div><svg style="left:8px;top:454px" width="10" height="10" viewBox="0 0 10 10"><path d="M9 1.5V0.5H0.8L4.6 4.8L0.8 9.2H9V8.5" stroke="#8a8a8a" stroke-width="1" fill="none"/></svg><div class="t" style="left:25px;top:450.84px;font-size:12px;line-height:16px;color:#000;transform:scaleX(0.9559);transform-origin:0 0;">11 Элемент(ов)</div><svg style="left:114px;top:457px" width="7" height="4" viewBox="0 0 7 4" shape-rendering="crispEdges"><rect x="0" y="0" width="7" height="1" fill="#222"/><rect x="1" y="1" width="5" height="1" fill="#222"/><rect x="2" y="2" width="3" height="1" fill="#222"/><rect x="3" y="3" width="1" height="1" fill="#222"/></svg><div style="left:703px;top:56px;width:696px;height:1px;background:#a0a0a0;"></div><div style="left:703px;top:56px;width:1px;height:414px;background:#a0a0a0;"></div><div style="left:704px;top:57px;width:695px;height:1px;background:#f8f8f8;"></div><div style="left:704px;top:57px;width:1px;height:413px;background:#f8f8f8;"></div><div style="left:705px;top:58px;width:694px;height:24px;background:#f0f0f0;"></div><svg style="left:707px;top:61px" width="16" height="16" viewBox="0 0 16 16"><defs><radialGradient id="gb" cx="0.4" cy="0.3" r="0.8"><stop offset="0" stop-color="#8fd0ff"/><stop offset="0.6" stop-color="#1f6fc0"/><stop offset="1" stop-color="#0b3f80"/></radialGradient><radialGradient id="gg" cx="0.4" cy="0.3" r="0.8"><stop offset="0" stop-color="#d8d8d8"/><stop offset="0.6" stop-color="#6a6a6a"/><stop offset="1" stop-color="#333"/></radialGradient></defs><circle cx="8" cy="8" r="7.5" fill="url(#gb)"/><path d="M12 8H5M8 4.5L4.5 8L8 11.5" stroke="#fff" stroke-width="2" fill="none"/></svg><svg style="left:730px;top:61px" width="16" height="16" viewBox="0 0 16 16"><circle cx="8" cy="8" r="7.5" fill="url(#gg)"/><path d="M4 8H11M8 4.5L11.5 8L8 11.5" stroke="#fff" stroke-width="2" fill="none"/></svg><svg style="left:753px;top:59px" width="16" height="19" viewBox="0 0 16 19"><path d="M1.5 17.5V6.5H6L7 7.5H11.5V10" fill="#fbe39a" stroke="#d8a436"/><path d="M1.5 17.5L4.5 10.5H15L11.5 16.5Z" fill="#fdeeb5" stroke="#d8a436"/><path d="M8.2 15.5Q10 11 9.3 6" stroke="#1e8c1e" stroke-width="3" fill="none"/><path d="M8.6 15Q9.8 11 9.4 7" stroke="#6ad84a" stroke-width="1" fill="none"/><path d="M5 7.5L9.3 1L14.5 6.5Z" fill="#1e8c1e"/></svg><svg style="left:777px;top:61px" width="17" height="16" viewBox="0 0 17 16"><path d="M1.5 14.5V3.5H6L7 4.5H11.5V7" fill="#fbe39a" stroke="#d8a436"/><path d="M1.5 14.5L4.5 7.5H13L10.5 13.5Z" fill="#fdeeb5" stroke="#d8a436"/><path d="M12.8 1.5L13.6 3.5L15.6 3L14.8 5L16.5 6.2L14.6 7L15 9L13 8.2L11.8 9.8L11.2 7.8L9.2 7.6L10.5 6L9.3 4.3L11.4 4.2Z" fill="#ff4a10"/><circle cx="12.9" cy="5.8" r="1.5" fill="#ffe060"/></svg><svg style="left:801px;top:61px" width="16" height="15" viewBox="0 0 16 15"><rect x="0.5" y="0.5" width="15" height="14" fill="#fff" stroke="#1f5fb8"/><rect x="0.5" y="0.5" width="15" height="2.5" fill="#1f5fb8"/><rect x="3" y="5" width="2" height="2" fill="#88a"/><rect x="7" y="5" width="2" height="2" fill="#66c"/><rect x="11" y="5" width="2" height="2" fill="#2a2"/><rect x="3" y="9" width="2" height="2" fill="#e33"/><rect x="7" y="9" width="2" height="2" fill="#23a"/><rect x="11" y="9" width="2" height="2" fill="#ca3"/></svg><svg style="left:823px;top:66px" width="7" height="4" viewBox="0 0 7 4" shape-rendering="crispEdges"><rect x="0" y="0" width="7" height="1" fill="#222"/><rect x="1" y="1" width="5" height="1" fill="#222"/><rect x="2" y="2" width="3" height="1" fill="#222"/><rect x="3" y="3" width="1" height="1" fill="#222"/></svg><svg style="left:837px;top:61px" width="16" height="16" viewBox="0 0 16 16"><path d="M2.5 7A5.5 5.5 0 0 1 12.5 4.5" stroke="#2a8ee8" stroke-width="2.6" fill="none"/><path d="M10 1.5L15 2L14 7Z" fill="#2a8ee8"/><path d="M13.5 9A5.5 5.5 0 0 1 3.5 11.5" stroke="#2a8ee8" stroke-width="2.6" fill="none"/><path d="M6 14.5L1 14L2 9Z" fill="#2a8ee8"/></svg><div style="left:860px;top:57px;width:463px;height:24px;background:#fff;border:1px solid #7a7a7a;box-sizing:border-box;"></div><svg style="left:864px;top:61px" width="14" height="16" viewBox="0 0 14 16"><path d="M0.5 0.5H12.5V9.5H13.5V15.5H0.5Z" fill="#fde39a" stroke="#e8c35a"/><path d="M10.5 9.5H12.5V15.5H10.5Z" fill="#fde39a" stroke="#e8c35a"/></svg><div class="t" style="left:885px;top:61.84px;font-size:12px;line-height:16px;color:#000;transform:scaleX(0.9640);transform-origin:0 0;">C:\Program Files (x86)\</div><svg style="left:1311px;top:67px" width="9" height="5" viewBox="0 0 9 5"><path d="M0.5 0.5L4.5 4.5L8.5 0.5" stroke="#444" fill="none"/></svg><svg style="left:1330px;top:62px" width="17" height="13" viewBox="0 0 17 13"><defs><linearGradient id="mon1" x1="0" y1="0" x2="1" y2="1"><stop offset="0" stop-color="#0a8ef4"/><stop offset="0.5" stop-color="#2aa8ff"/><stop offset="1" stop-color="#0a8ef4"/></linearGradient></defs><rect x="0.5" y="0.5" width="15.5" height="11.5" fill="url(#mon1)" stroke="#0b6cc8"/><rect x="1" y="10" width="15" height="2" fill="#0b4f98"/><rect x="1.5" y="10.5" width="1" height="1" fill="#fff"/><rect x="12.5" y="10.5" width="1" height="1" fill="#fff"/><rect x="14.5" y="10.5" width="1" height="1" fill="#fff"/></svg><svg style="left:1350px;top:66px" width="7" height="4" viewBox="0 0 7 4" shape-rendering="crispEdges"><rect x="0" y="0" width="7" height="1" fill="#222"/><rect x="1" y="1" width="5" height="1" fill="#222"/><rect x="2" y="2" width="3" height="1" fill="#222"/><rect x="3" y="3" width="1" height="1" fill="#222"/></svg><svg style="left:1368px;top:61px" width="17" height="15" viewBox="0 0 17 15"><defs><linearGradient id="mon2" x1="0" y1="0" x2="1" y2="1"><stop offset="0" stop-color="#8ed4ff"/><stop offset="0.5" stop-color="#5cc0ff"/><stop offset="1" stop-color="#3aa8f0"/></linearGradient></defs><rect x="0.5" y="0.5" width="15.5" height="9.5" fill="url(#mon2)" stroke="#2a7ab8"/><rect x="6" y="11" width="5" height="1" fill="#7a9ac0"/><rect x="0.5" y="13.5" width="15.5" height="1.2" fill="#9ab0c8"/></svg><svg style="left:1388px;top:66px" width="7" height="4" viewBox="0 0 7 4" shape-rendering="crispEdges"><rect x="0" y="0" width="7" height="1" fill="#222"/><rect x="1" y="1" width="5" height="1" fill="#222"/><rect x="2" y="2" width="3" height="1" fill="#222"/><rect x="3" y="3" width="1" height="1" fill="#222"/></svg><div style="left:704px;top:82px;width:695px;height:1px;background:#a0a0a0;"></div><div style="left:704px;top:81px;width:695px;height:1px;background:#f8f8f8;"></div><div style="left:704px;top:83px;width:695px;height:22px;background:#f0f0f0;"></div><div style="left:704px;top:83px;width:695px;height:1px;background:#f6f6f6;"></div><div style="left:705px;top:84px;width:130px;height:22px;background:#fff;"></div><div style="left:835px;top:84px;width:1px;height:22px;background:#dcdcdc;"></div><div style="left:836px;top:105px;width:560px;height:1px;background:#dadada;"></div><svg style="left:715px;top:85px" width="14" height="16" viewBox="0 0 14 16"><path d="M0.5 0.5H12.5V9.5H13.5V15.5H0.5Z" fill="#fde39a" stroke="#e8c35a"/><path d="M10.5 9.5H12.5V15.5H10.5Z" fill="#fde39a" stroke="#e8c35a"/></svg><div class="t" style="left:735px;top:85.84px;font-size:12px;line-height:16px;color:#000;transform:scaleX(0.8423);transform-origin:0 0;">Program Files (x8 ...</div><div style="left:704px;top:106px;width:695px;height:342px;background:#fff;"></div><div style="left:704px;top:448px;width:695px;height:22px;background:#f0f0f0;"></div><div class="t" style="left:711px;top:110.84px;font-size:12px;line-height:16px;color:#000;transform:scaleX(0.9850);transform-origin:0 0;">Имя</div><div class="t" style="left:983px;top:110.84px;font-size:12px;line-height:16px;color:#000;transform:scaleX(0.9850);transform-origin:0 0;">Дата изменения</div><div class="t" style="left:1127px;top:110.84px;font-size:12px;line-height:16px;color:#000;transform:scaleX(0.9850);transform-origin:0 0;">Тип</div><div class="t" style="left:1247px;top:110.84px;font-size:12px;line-height:16px;color:#000;transform:scaleX(0.9850);transform-origin:0 0;">Размер</div><div style="left:977px;top:108px;width:1px;height:22px;background:#e5e5e5;"></div><div style="left:1121px;top:108px;width:1px;height:22px;background:#e5e5e5;"></div><div style="left:1241px;top:108px;width:1px;height:22px;background:#e5e5e5;"></div><div style="left:1321px;top:108px;width:1px;height:22px;background:#e5e5e5;"></div><svg style="left:838px;top:107px" width="9" height="5" viewBox="0 0 9 5"><path d="M0.5 4.5L4.5 0.5L8.5 4.5" stroke="#666" fill="none"/></svg><svg style="left:715px;top:132px" width="14" height="16" viewBox="0 0 14 16"><path d="M0.5 0.5H12.5V9.5H13.5V15.5H0.5Z" fill="#fde39a" stroke="#e8c35a"/><path d="M10.5 9.5H12.5V15.5H10.5Z" fill="#fde39a" stroke="#e8c35a"/></svg><div class="t" style="left:731px;top:132.84px;font-size:12px;line-height:16px;color:#000;transform:scaleX(0.9774);transform-origin:0 0;">Common Files</div><div class="t" style="left:983px;top:132.84px;font-size:12px;line-height:16px;color:#000;transform:scaleX(0.8876);transform-origin:0 0;">29.02.2020 18:29</div><div class="t" style="left:1127px;top:132.84px;font-size:12px;line-height:16px;color:#000;transform:scaleX(0.9845);transform-origin:0 0;">Папка с файлами</div><svg style="left:715px;top:151px" width="14" height="16" viewBox="0 0 14 16"><path d="M0.5 0.5H12.5V9.5H13.5V15.5H0.5Z" fill="#fde39a" stroke="#e8c35a"/><path d="M10.5 9.5H12.5V15.5H10.5Z" fill="#fde39a" stroke="#e8c35a"/></svg><div class="t" style="left:731px;top:151.84px;font-size:12px;line-height:16px;color:#000;transform:scaleX(0.9784);transform-origin:0 0;">Creative</div><div class="t" style="left:983px;top:151.84px;font-size:12px;line-height:16px;color:#000;transform:scaleX(0.8876);transform-origin:0 0;">29.02.2020 18:30</div><div class="t" style="left:1127px;top:151.84px;font-size:12px;line-height:16px;color:#000;transform:scaleX(0.9845);transform-origin:0 0;">Папка с файлами</div><svg style="left:715px;top:170px" width="14" height="16" viewBox="0 0 14 16"><path d="M0.5 0.5H12.5V9.5H13.5V15.5H0.5Z" fill="#fde39a" stroke="#e8c35a"/><path d="M10.5 9.5H12.5V15.5H10.5Z" fill="#fde39a" stroke="#e8c35a"/></svg><div class="t" style="left:731px;top:170.84px;font-size:12px;line-height:16px;color:#000;transform:scaleX(0.9798);transform-origin:0 0;">Creative Professional</div><div class="t" style="left:983px;top:170.84px;font-size:12px;line-height:16px;color:#000;transform:scaleX(0.8876);transform-origin:0 0;">29.02.2020 18:30</div><div class="t" style="left:1127px;top:170.84px;font-size:12px;line-height:16px;color:#000;transform:scaleX(0.9845);transform-origin:0 0;">Папка с файлами</div><svg style="left:715px;top:189px" width="14" height="16" viewBox="0 0 14 16"><path d="M0.5 0.5H12.5V9.5H13.5V15.5H0.5Z" fill="#fde39a" stroke="#e8c35a"/><path d="M10.5 9.5H12.5V15.5H10.5Z" fill="#fde39a" stroke="#e8c35a"/></svg><div class="t" style="left:731px;top:189.84px;font-size:12px;line-height:16px;color:#000;transform:scaleX(0.9465);transform-origin:0 0;">GIGABYTE</div><div class="t" style="left:983px;top:189.84px;font-size:12px;line-height:16px;color:#000;transform:scaleX(0.8876);transform-origin:0 0;">29.02.2020 19:06</div><div class="t" style="left:1127px;top:189.84px;font-size:12px;line-height:16px;color:#000;transform:scaleX(0.9845);transform-origin:0 0;">Папка с файлами</div><svg style="left:715px;top:208px" width="14" height="16" viewBox="0 0 14 16"><path d="M0.5 0.5H12.5V9.5H13.5V15.5H0.5Z" fill="#fde39a" stroke="#e8c35a"/><path d="M10.5 9.5H12.5V15.5H10.5Z" fill="#fde39a" stroke="#e8c35a"/></svg><div class="t" style="left:731px;top:208.84px;font-size:12px;line-height:16px;color:#000;transform:scaleX(0.9774);transform-origin:0 0;">Google</div><div class="t" style="left:983px;top:208.84px;font-size:12px;line-height:16px;color:#000;transform:scaleX(0.8876);transform-origin:0 0;">29.02.2020 18:10</div><div class="t" style="left:1127px;top:208.84px;font-size:12px;line-height:16px;color:#000;transform:scaleX(0.9845);transform-origin:0 0;">Папка с файлами</div><svg style="left:715px;top:227px" width="14" height="16" viewBox="0 0 14 16"><path d="M0.5 0.5H12.5V9.5H13.5V15.5H0.5Z" fill="#fde39a" stroke="#e8c35a"/><path d="M10.5 9.5H12.5V15.5H10.5Z" fill="#fde39a" stroke="#e8c35a"/></svg><div class="t" style="left:731px;top:227.84px;font-size:12px;line-height:16px;color:#000;transform:scaleX(0.9720);transform-origin:0 0;">Intel</div><div class="t" style="left:983px;top:227.84px;font-size:12px;line-height:16px;color:#000;transform:scaleX(0.8876);transform-origin:0 0;">29.02.2020 19:06</div><div class="t" style="left:1127px;top:227.84px;font-size:12px;line-height:16px;color:#000;transform:scaleX(0.9845);transform-origin:0 0;">Папка с файлами</div><svg style="left:715px;top:246px" width="14" height="16" viewBox="0 0 14 16"><path d="M0.5 0.5H12.5V9.5H13.5V15.5H0.5Z" fill="#fde39a" stroke="#e8c35a"/><path d="M10.5 9.5H12.5V15.5H10.5Z" fill="#fde39a" stroke="#e8c35a"/></svg><div class="t" style="left:731px;top:246.84px;font-size:12px;line-height:16px;color:#000;transform:scaleX(0.9783);transform-origin:0 0;">Internet Explorer</div><div class="t" style="left:983px;top:246.84px;font-size:12px;line-height:16px;color:#000;transform:scaleX(0.8876);transform-origin:0 0;">29.02.2020 18:31</div><div class="t" style="left:1127px;top:246.84px;font-size:12px;line-height:16px;color:#000;transform:scaleX(0.9845);transform-origin:0 0;">Папка с файлами</div><svg style="left:715px;top:265px" width="14" height="16" viewBox="0 0 14 16"><path d="M0.5 0.5H12.5V9.5H13.5V15.5H0.5Z" fill="#fde39a" stroke="#e8c35a"/><path d="M10.5 9.5H12.5V15.5H10.5Z" fill="#fde39a" stroke="#e8c35a"/></svg><div class="t" style="left:731px;top:265.84px;font-size:12px;line-height:16px;color:#000;transform:scaleX(0.9789);transform-origin:0 0;">Microsoft</div><div class="t" style="left:983px;top:265.84px;font-size:12px;line-height:16px;color:#000;transform:scaleX(0.8876);transform-origin:0 0;">29.02.2020 19:02</div><div class="t" style="left:1127px;top:265.84px;font-size:12px;line-height:16px;color:#000;transform:scaleX(0.9845);transform-origin:0 0;">Папка с файлами</div><svg style="left:715px;top:284px" width="14" height="16" viewBox="0 0 14 16"><path d="M0.5 0.5H12.5V9.5H13.5V15.5H0.5Z" fill="#fde39a" stroke="#e8c35a"/><path d="M10.5 9.5H12.5V15.5H10.5Z" fill="#fde39a" stroke="#e8c35a"/></svg><div class="t" style="left:731px;top:284.84px;font-size:12px;line-height:16px;color:#000;transform:scaleX(0.9643);transform-origin:0 0;">Microsoft.NET</div><div class="t" style="left:983px;top:284.84px;font-size:12px;line-height:16px;color:#000;transform:scaleX(0.8877);transform-origin:0 0;">01.03.2020 0:52</div><div class="t" style="left:1127px;top:284.84px;font-size:12px;line-height:16px;color:#000;transform:scaleX(0.9845);transform-origin:0 0;">Папка с файлами</div><svg style="left:715px;top:303px" width="14" height="16" viewBox="0 0 14 16"><path d="M0.5 0.5H12.5V9.5H13.5V15.5H0.5Z" fill="#fde39a" stroke="#e8c35a"/><path d="M10.5 9.5H12.5V15.5H10.5Z" fill="#fde39a" stroke="#e8c35a"/></svg><div class="t" style="left:731px;top:303.84px;font-size:12px;line-height:16px;color:#000;transform:scaleX(0.9652);transform-origin:0 0;">MSBuild</div><div class="t" style="left:983px;top:303.84px;font-size:12px;line-height:16px;color:#000;transform:scaleX(0.8877);transform-origin:0 0;">01.03.2020 0:00</div><div class="t" style="left:1127px;top:303.84px;font-size:12px;line-height:16px;color:#000;transform:scaleX(0.9845);transform-origin:0 0;">Папка с файлами</div><svg style="left:715px;top:322px" width="14" height="16" viewBox="0 0 14 16"><path d="M0.5 0.5H12.5V9.5H13.5V15.5H0.5Z" fill="#fde39a" stroke="#e8c35a"/><path d="M10.5 9.5H12.5V15.5H10.5Z" fill="#fde39a" stroke="#e8c35a"/></svg><div class="t" style="left:731px;top:322.84px;font-size:12px;line-height:16px;color:#000;transform:scaleX(0.9654);transform-origin:0 0;">NVIDIA Corporation</div><div class="t" style="left:983px;top:322.84px;font-size:12px;line-height:16px;color:#000;transform:scaleX(0.8876);transform-origin:0 0;">29.02.2020 18:45</div><div class="t" style="left:1127px;top:322.84px;font-size:12px;line-height:16px;color:#000;transform:scaleX(0.9845);transform-origin:0 0;">Папка с файлами</div><svg style="left:715px;top:341px" width="14" height="16" viewBox="0 0 14 16"><path d="M0.5 0.5H12.5V9.5H13.5V15.5H0.5Z" fill="#fde39a" stroke="#e8c35a"/><path d="M10.5 9.5H12.5V15.5H10.5Z" fill="#fde39a" stroke="#e8c35a"/></svg><div class="t" style="left:731px;top:341.84px;font-size:12px;line-height:16px;color:#000;transform:scaleX(0.9800);transform-origin:0 0;">Reference Assemblies</div><div class="t" style="left:983px;top:341.84px;font-size:12px;line-height:16px;color:#000;transform:scaleX(0.8876);transform-origin:0 0;">29.02.2020 19:03</div><div class="t" style="left:1127px;top:341.84px;font-size:12px;line-height:16px;color:#000;transform:scaleX(0.9845);transform-origin:0 0;">Папка с файлами</div><svg style="left:715px;top:360px" width="14" height="16" viewBox="0 0 14 16"><path d="M0.5 0.5H12.5V9.5H13.5V15.5H0.5Z" fill="#fde39a" stroke="#e8c35a"/><path d="M10.5 9.5H12.5V15.5H10.5Z" fill="#fde39a" stroke="#e8c35a"/></svg><div class="t" style="left:731px;top:360.84px;font-size:12px;line-height:16px;color:#000;transform:scaleX(0.9765);transform-origin:0 0;">Steam</div><div class="t" style="left:983px;top:360.84px;font-size:12px;line-height:16px;color:#000;transform:scaleX(0.8877);transform-origin:0 0;">01.03.2020 0:50</div><div class="t" style="left:1127px;top:360.84px;font-size:12px;line-height:16px;color:#000;transform:scaleX(0.9845);transform-origin:0 0;">Папка с файлами</div><svg style="left:715px;top:379px" width="14" height="16" viewBox="0 0 14 16"><path d="M0.5 0.5H12.5V9.5H13.5V15.5H0.5Z" fill="#fde39a" stroke="#e8c35a"/><path d="M10.5 9.5H12.5V15.5H10.5Z" fill="#fde39a" stroke="#e8c35a"/></svg><div class="t" style="left:731px;top:379.84px;font-size:12px;line-height:16px;color:#000;transform:scaleX(0.9706);transform-origin:0 0;">TeamSpeak 3 Client</div><div class="t" style="left:983px;top:379.84px;font-size:12px;line-height:16px;color:#000;transform:scaleX(0.8876);transform-origin:0 0;">29.02.2020 20:57</div><div class="t" style="left:1127px;top:379.84px;font-size:12px;line-height:16px;color:#000;transform:scaleX(0.9845);transform-origin:0 0;">Папка с файлами</div><svg style="left:715px;top:398px" width="14" height="16" viewBox="0 0 14 16"><path d="M0.5 0.5H12.5V9.5H13.5V15.5H0.5Z" fill="#fde39a" stroke="#e8c35a"/><path d="M10.5 9.5H12.5V15.5H10.5Z" fill="#fde39a" stroke="#e8c35a"/></svg><div class="t" style="left:731px;top:398.84px;font-size:12px;line-height:16px;color:#000;transform:scaleX(0.9792);transform-origin:0 0;">Windows Defender</div><div class="t" style="left:983px;top:398.84px;font-size:12px;line-height:16px;color:#000;transform:scaleX(0.8876);transform-origin:0 0;">29.02.2020 19:04</div><div class="t" style="left:1127px;top:398.84px;font-size:12px;line-height:16px;color:#000;transform:scaleX(0.9845);transform-origin:0 0;">Папка с файлами</div><svg style="left:715px;top:417px" width="14" height="16" viewBox="0 0 14 16"><path d="M0.5 0.5H12.5V9.5H13.5V15.5H0.5Z" fill="#fde39a" stroke="#e8c35a"/><path d="M10.5 9.5H12.5V15.5H10.5Z" fill="#fde39a" stroke="#e8c35a"/></svg><div class="t" style="left:731px;top:417.84px;font-size:12px;line-height:16px;color:#000;transform:scaleX(0.9770);transform-origin:0 0;">Windows Mail</div><div class="t" style="left:983px;top:417.84px;font-size:12px;line-height:16px;color:#000;transform:scaleX(0.8876);transform-origin:0 0;">29.02.2020 18:44</div><div class="t" style="left:1127px;top:417.84px;font-size:12px;line-height:16px;color:#000;transform:scaleX(0.9845);transform-origin:0 0;">Папка с файлами</div><svg style="left:715px;top:436px" width="14" height="16" viewBox="0 0 14 16"><path d="M0.5 0.5H12.5V9.5H13.5V15.5H0.5Z" fill="#fde39a" stroke="#e8c35a"/><path d="M10.5 9.5H12.5V15.5H10.5Z" fill="#fde39a" stroke="#e8c35a"/></svg><div class="t" style="left:731px;top:436.84px;font-size:12px;line-height:16px;color:#000;transform:scaleX(0.9777);transform-origin:0 0;">Windows Media Player</div><div class="t" style="left:983px;top:436.84px;font-size:12px;line-height:16px;color:#000;transform:scaleX(0.8876);transform-origin:0 0;">29.02.2020 14:34</div><div class="t" style="left:1127px;top:436.84px;font-size:12px;line-height:16px;color:#000;transform:scaleX(0.9845);transform-origin:0 0;">Папка с файлами</div><div style="left:704px;top:448px;width:695px;height:22px;background:#f0f0f0;"></div><div style="left:1382px;top:106px;width:16px;height:342px;background:#f0f0f0;"></div><div style="left:1382px;top:124px;width:15px;height:196px;background:#cdcdcd;"></div><svg style="left:1386px;top:112px" width="8" height="6" viewBox="0 0 8 6"><path d="M0.8 5L4 1.5L7.2 5" stroke="#505050" stroke-width="1.9" fill="none"/></svg><svg style="left:1386px;top:436px" width="8" height="6" viewBox="0 0 8 6"><path d="M0.8 1L4 4.5L7.2 1" stroke="#505050" stroke-width="1.9" fill="none"/></svg><svg style="left:1378px;top:450px" width="17" height="17" viewBox="-1 -1 17 17" shape-rendering="crispEdges"><rect width="15" height="15" fill="#9a9a9a"/><rect x="1" y="1" width="1" height="1" fill="#fff"/><rect x="3" y="1" width="1" height="1" fill="#fff"/><rect x="5" y="1" width="1" height="1" fill="#fff"/><rect x="7" y="1" width="1" height="1" fill="#fff"/><rect x="9" y="1" width="1" height="1" fill="#fff"/><rect x="11" y="1" width="1" height="1" fill="#fff"/><rect x="13" y="1" width="1" height="1" fill="#fff"/><rect x="1" y="3" width="1" height="1" fill="#fff"/><rect x="3" y="3" width="1" height="1" fill="#000"/><rect x="5" y="3" width="1" height="1" fill="#000"/><rect x="7" y="3" width="1" height="1" fill="#000"/><rect x="9" y="3" width="1" height="1" fill="#000"/><rect x="11" y="3" width="1" height="1" fill="#000"/><rect x="13" y="3" width="1" height="1" fill="#fff"/><rect x="1" y="5" width="1" height="1" fill="#fff"/><rect x="3" y="5" width="1" height="1" fill="#000"/><rect x="5" y="5" width="1" height="1" fill="#fff"/><rect x="7" y="5" width="1" height="1" fill="#fff"/><rect x="9" y="5" width="1" height="1" fill="#fff"/><rect x="11" y="5" width="1" height="1" fill="#000"/><rect x="13" y="5" width="1" height="1" fill="#fff"/><rect x="1" y="7" width="1" height="1" fill="#fff"/><rect x="3" y="7" width="1" height="1" fill="#000"/><rect x="5" y="7" width="1" height="1" fill="#fff"/><rect x="7" y="7" width="1" height="1" fill="#fff"/><rect x="9" y="7" width="1" height="1" fill="#fff"/><rect x="11" y="7" width="1" height="1" fill="#000"/><rect x="13" y="7" width="1" height="1" fill="#fff"/><rect x="1" y="9" width="1" height="1" fill="#fff"/><rect x="3" y="9" width="1" height="1" fill="#000"/><rect x="5" y="9" width="1" height="1" fill="#fff"/><rect x="7" y="9" width="1" height="1" fill="#fff"/><rect x="9" y="9" width="1" height="1" fill="#000"/><rect x="11" y="9" width="1" height="1" fill="#000"/><rect x="13" y="9" width="1" height="1" fill="#fff"/><rect x="1" y="11" width="1" height="1" fill="#fff"/><rect x="3" y="11" width="1" height="1" fill="#000"/><rect x="5" y="11" width="1" height="1" fill="#000"/><rect x="7" y="11" width="1" height="1" fill="#000"/><rect x="9" y="11" width="1" height="1" fill="#000"/><rect x="11" y="11" width="1" height="1" fill="#000"/><rect x="13" y="11" width="1" height="1" fill="#fff"/><rect x="1" y="13" width="1" height="1" fill="#fff"/><rect x="3" y="13" width="1" height="1" fill="#fff"/><rect x="5" y="13" width="1" height="1" fill="#fff"/><rect x="7" y="13" width="1" height="1" fill="#fff"/><rect x="9" y="13" width="1" height="1" fill="#fff"/><rect x="11" y="13" width="1" height="1" fill="#fff"/><rect x="13" y="13" width="1" height="1" fill="#000"/></svg><svg style="left:1356px;top:451px" width="17" height="16" viewBox="0 0 17 16"><path d="M3.5 10.5L12 2L15 5L6.5 13.5L3 14Z" fill="#fff" stroke="#000" stroke-width="1.3"/><path d="M6 10L10.5 5.5" stroke="#2a6ae0" stroke-width="1.8"/><path d="M10.5 5.5L12.5 3.5" stroke="#e22" stroke-width="1.8"/><path d="M5 11.5L6 10.5" stroke="#2a2" stroke-width="1.5"/><rect x="0" y="11" width="16" height="5" fill="#aaa"/><path d="M1.5 12.5H3.5M5.5 12.5H7.5M11.5 12.5H13.5M1.5 14.5H3.5M5.5 14.5H7.5M11.5 14.5H13.5" stroke="#fff"/></svg><div style="left:1347px;top:450px;width:1px;height:18px;background:#777;"></div><svg style="left:1326px;top:451px" width="14" height="15" viewBox="0 0 14 15"><rect x="1" y="2" width="12" height="12.5" fill="#fff" stroke="#7a4a1a" stroke-width="1.6"/><rect x="4" y="0.5" width="6" height="3" fill="#888"/><path d="M3.5 6.5H10.5M3.5 8.5H10.5M3.5 10.5H10.5M3.5 12.5H10.5" stroke="#5a8ad0"/></svg><svg style="left:1303px;top:451px" width="15" height="17" viewBox="0 0 15 17"><path d="M0.5 0.5H6.5L9.5 3.5V11.5H0.5Z" fill="#fff" stroke="#999"/><path d="M2 4.5H6M2 6.5H7M2 8.5H7" stroke="#5a8ad0"/><path d="M5.5 5.5H11.5L14.5 8.5V16.5H5.5Z" fill="#fff" stroke="#999"/><path d="M7 10.5H13M7 12.5H13M7 14.5H13" stroke="#3a7ad0"/></svg><svg style="left:1282px;top:451px" width="12" height="17" viewBox="0 0 12 17"><path d="M2.5 0L7 11M9.5 0L5 11" stroke="#8a8a8a" stroke-width="1.3"/><circle cx="3.2" cy="13.3" r="2.4" fill="none" stroke="#1e7fd8" stroke-width="1.5"/><circle cx="8.8" cy="13.3" r="2.4" fill="none" stroke="#1e7fd8" stroke-width="1.5"/></svg><div style="left:1271px;top:450px;width:1px;height:18px;background:#777;"></div><svg style="left:1250px;top:453px" width="14" height="13" viewBox="0 0 14 13"><path d="M1.5 1L12.5 12M12.5 1L1.5 12" stroke="#d81b1b" stroke-width="3.2"/></svg><svg style="left:1225px;top:454px" width="17" height="11" viewBox="0 0 17 11"><rect x="0.5" y="0.5" width="15.5" height="9.5" fill="#f8f8f8" stroke="#9a9a9a"/><path d="M2.5 3.5H7.5M5 6.5H12" stroke="#9a9a9a"/><rect x="12" y="2" width="2" height="2" fill="#3a8ad8"/></svg><svg style="left:1203px;top:451px" width="14" height="17" viewBox="0 0 14 17"><path d="M5.5 1.5H12.5L9.5 5H12L7 10H9.5L3 16L4.5 11H1.5L5 7H2Z" fill="#999" transform="translate(1 0.7)"/><path d="M5.5 1.5H12.5L9.5 5H12L7 10H9.5L3 16L4.5 11H1.5L5 7H2Z" fill="#fff" stroke="#000" stroke-width="1.3" stroke-linejoin="round"/></svg><div style="left:1px;top:476px;width:696px;height:1px;background:#a0a0a0;"></div><div style="left:1px;top:476px;width:1px;height:413px;background:#a0a0a0;"></div><div style="left:2px;top:477px;width:695px;height:1px;background:#f8f8f8;"></div><div style="left:2px;top:477px;width:1px;height:412px;background:#f8f8f8;"></div><div style="left:3px;top:478px;width:694px;height:24px;background:#f0f0f0;"></div><svg style="left:5px;top:481px" width="16" height="16" viewBox="0 0 16 16"><defs><radialGradient id="gb" cx="0.4" cy="0.3" r="0.8"><stop offset="0" stop-color="#8fd0ff"/><stop offset="0.6" stop-color="#1f6fc0"/><stop offset="1" stop-color="#0b3f80"/></radialGradient><radialGradient id="gg" cx="0.4" cy="0.3" r="0.8"><stop offset="0" stop-color="#d8d8d8"/><stop offset="0.6" stop-color="#6a6a6a"/><stop offset="1" stop-color="#333"/></radialGradient></defs><circle cx="8" cy="8" r="7.5" fill="url(#gb)"/><path d="M12 8H5M8 4.5L4.5 8L8 11.5" stroke="#fff" stroke-width="2" fill="none"/></svg><svg style="left:28px;top:481px" width="16" height="16" viewBox="0 0 16 16"><circle cx="8" cy="8" r="7.5" fill="url(#gg)"/><path d="M4 8H11M8 4.5L11.5 8L8 11.5" stroke="#fff" stroke-width="2" fill="none"/></svg><svg style="left:51px;top:479px" width="16" height="19" viewBox="0 0 16 19"><path d="M1.5 17.5V6.5H6L7 7.5H11.5V10" fill="#fbe39a" stroke="#d8a436"/><path d="M1.5 17.5L4.5 10.5H15L11.5 16.5Z" fill="#fdeeb5" stroke="#d8a436"/><path d="M8.2 15.5Q10 11 9.3 6" stroke="#1e8c1e" stroke-width="3" fill="none"/><path d="M8.6 15Q9.8 11 9.4 7" stroke="#6ad84a" stroke-width="1" fill="none"/><path d="M5 7.5L9.3 1L14.5 6.5Z" fill="#1e8c1e"/></svg><svg style="left:75px;top:481px" width="17" height="16" viewBox="0 0 17 16"><path d="M1.5 14.5V3.5H6L7 4.5H11.5V7" fill="#fbe39a" stroke="#d8a436"/><path d="M1.5 14.5L4.5 7.5H13L10.5 13.5Z" fill="#fdeeb5" stroke="#d8a436"/><path d="M12.8 1.5L13.6 3.5L15.6 3L14.8 5L16.5 6.2L14.6 7L15 9L13 8.2L11.8 9.8L11.2 7.8L9.2 7.6L10.5 6L9.3 4.3L11.4 4.2Z" fill="#ff4a10"/><circle cx="12.9" cy="5.8" r="1.5" fill="#ffe060"/></svg><svg style="left:99px;top:481px" width="16" height="15" viewBox="0 0 16 15"><rect x="0.5" y="0.5" width="15" height="14" fill="#fff" stroke="#1f5fb8"/><rect x="0.5" y="0.5" width="15" height="2.5" fill="#1f5fb8"/><rect x="3" y="5" width="2" height="2" fill="#88a"/><rect x="7" y="5" width="2" height="2" fill="#66c"/><rect x="11" y="5" width="2" height="2" fill="#2a2"/><rect x="3" y="9" width="2" height="2" fill="#e33"/><rect x="7" y="9" width="2" height="2" fill="#23a"/><rect x="11" y="9" width="2" height="2" fill="#ca3"/></svg><svg style="left:121px;top:486px" width="7" height="4" viewBox="0 0 7 4" shape-rendering="crispEdges"><rect x="0" y="0" width="7" height="1" fill="#222"/><rect x="1" y="1" width="5" height="1" fill="#222"/><rect x="2" y="2" width="3" height="1" fill="#222"/><rect x="3" y="3" width="1" height="1" fill="#222"/></svg><svg style="left:135px;top:481px" width="16" height="16" viewBox="0 0 16 16"><path d="M2.5 7A5.5 5.5 0 0 1 12.5 4.5" stroke="#2a8ee8" stroke-width="2.6" fill="none"/><path d="M10 1.5L15 2L14 7Z" fill="#2a8ee8"/><path d="M13.5 9A5.5 5.5 0 0 1 3.5 11.5" stroke="#2a8ee8" stroke-width="2.6" fill="none"/><path d="M6 14.5L1 14L2 9Z" fill="#2a8ee8"/></svg><div style="left:157px;top:477px;width:464px;height:24px;background:#fff;border:1px solid #7a7a7a;box-sizing:border-box;"></div><svg style="left:161px;top:481px" width="14" height="16" viewBox="0 0 14 16"><path d="M0.5 0.5H12.5V9.5H13.5V15.5H0.5Z" fill="#fde39a" stroke="#e8c35a"/><path d="M10.5 9.5H12.5V15.5H10.5Z" fill="#fde39a" stroke="#e8c35a"/></svg><div class="t" style="left:182px;top:481.84px;font-size:12px;line-height:16px;color:#000;transform:scaleX(1.0077);transform-origin:0 0;">A:\VM\Ubuntu 16.04.6 (32-bit)\</div><svg style="left:609px;top:487px" width="9" height="5" viewBox="0 0 9 5"><path d="M0.5 0.5L4.5 4.5L8.5 0.5" stroke="#444" fill="none"/></svg><svg style="left:628px;top:482px" width="17" height="13" viewBox="0 0 17 13"><defs><linearGradient id="mon1" x1="0" y1="0" x2="1" y2="1"><stop offset="0" stop-color="#0a8ef4"/><stop offset="0.5" stop-color="#2aa8ff"/><stop offset="1" stop-color="#0a8ef4"/></linearGradient></defs><rect x="0.5" y="0.5" width="15.5" height="11.5" fill="url(#mon1)" stroke="#0b6cc8"/><rect x="1" y="10" width="15" height="2" fill="#0b4f98"/><rect x="1.5" y="10.5" width="1" height="1" fill="#fff"/><rect x="12.5" y="10.5" width="1" height="1" fill="#fff"/><rect x="14.5" y="10.5" width="1" height="1" fill="#fff"/></svg><svg style="left:648px;top:486px" width="7" height="4" viewBox="0 0 7 4" shape-rendering="crispEdges"><rect x="0" y="0" width="7" height="1" fill="#222"/><rect x="1" y="1" width="5" height="1" fill="#222"/><rect x="2" y="2" width="3" height="1" fill="#222"/><rect x="3" y="3" width="1" height="1" fill="#222"/></svg><svg style="left:666px;top:481px" width="17" height="15" viewBox="0 0 17 15"><defs><linearGradient id="mon2" x1="0" y1="0" x2="1" y2="1"><stop offset="0" stop-color="#8ed4ff"/><stop offset="0.5" stop-color="#5cc0ff"/><stop offset="1" stop-color="#3aa8f0"/></linearGradient></defs><rect x="0.5" y="0.5" width="15.5" height="9.5" fill="url(#mon2)" stroke="#2a7ab8"/><rect x="6" y="11" width="5" height="1" fill="#7a9ac0"/><rect x="0.5" y="13.5" width="15.5" height="1.2" fill="#9ab0c8"/></svg><svg style="left:686px;top:486px" width="7" height="4" viewBox="0 0 7 4" shape-rendering="crispEdges"><rect x="0" y="0" width="7" height="1" fill="#222"/><rect x="1" y="1" width="5" height="1" fill="#222"/><rect x="2" y="2" width="3" height="1" fill="#222"/><rect x="3" y="3" width="1" height="1" fill="#222"/></svg><div style="left:2px;top:502px;width:695px;height:1px;background:#a0a0a0;"></div><div style="left:2px;top:501px;width:695px;height:1px;background:#f8f8f8;"></div><div style="left:2px;top:503px;width:695px;height:22px;background:#f0f0f0;"></div><div style="left:2px;top:503px;width:695px;height:1px;background:#f6f6f6;"></div><div style="left:3px;top:504px;width:135px;height:22px;background:#fff;"></div><div style="left:138px;top:504px;width:1px;height:22px;background:#dcdcdc;"></div><div style="left:139px;top:525px;width:555px;height:1px;background:#dadada;"></div><svg style="left:13px;top:505px" width="14" height="16" viewBox="0 0 14 16"><path d="M0.5 0.5H12.5V9.5H13.5V15.5H0.5Z" fill="#fde39a" stroke="#e8c35a"/><path d="M10.5 9.5H12.5V15.5H10.5Z" fill="#fde39a" stroke="#e8c35a"/></svg><div class="t" style="left:33px;top:505.84px;font-size:12px;line-height:16px;color:#000;transform:scaleX(0.8775);transform-origin:0 0;">Ubuntu 16.04.6 (3 ...</div><div style="left:2px;top:526px;width:695px;height:340px;background:#fff;"></div><div style="left:2px;top:866px;width:695px;height:23px;background:#f0f0f0;"></div><div class="t" style="left:9px;top:530.84px;font-size:12px;line-height:16px;color:#000;transform:scaleX(0.9850);transform-origin:0 0;">Имя</div><div class="t" style="left:256px;top:530.84px;font-size:12px;line-height:16px;color:#000;transform:scaleX(0.9850);transform-origin:0 0;">Даты</div><div class="t" style="left:400px;top:530.84px;font-size:12px;line-height:16px;color:#000;transform:scaleX(0.9850);transform-origin:0 0;">Тип</div><div style="left:249px;top:528px;width:1px;height:22px;background:#e5e5e5;"></div><div style="left:394px;top:528px;width:1px;height:22px;background:#e5e5e5;"></div><div style="left:514px;top:528px;width:1px;height:22px;background:#e5e5e5;"></div><svg style="left:122px;top:527px" width="9" height="5" viewBox="0 0 9 5"><path d="M0.5 4.5L4.5 0.5L8.5 4.5" stroke="#666" fill="none"/></svg><svg style="left:13px;top:552px" width="14" height="16" viewBox="0 0 14 16"><path d="M0.5 0.5H12.5V9.5H13.5V15.5H0.5Z" fill="#fde39a" stroke="#e8c35a"/><path d="M10.5 9.5H12.5V15.5H10.5Z" fill="#fde39a" stroke="#e8c35a"/></svg><div class="t" style="left:29px;top:552.84px;font-size:12px;line-height:16px;color:#000;transform:scaleX(0.9373);transform-origin:0 0;">Logs</div><div class="t" style="left:256px;top:552.84px;font-size:12px;line-height:16px;color:#000;transform:scaleX(0.8922);transform-origin:0 0;">08.10.2019 9:13</div><svg style="left:13px;top:571px" width="14" height="16" viewBox="0 0 14 16"><path d="M0.5 0.5H12.5V9.5H13.5V15.5H0.5Z" fill="#fde39a" stroke="#e8c35a"/><path d="M10.5 9.5H12.5V15.5H10.5Z" fill="#fde39a" stroke="#e8c35a"/></svg><div class="t" style="left:29px;top:571.84px;font-size:12px;line-height:16px;color:#000;transform:scaleX(0.9380);transform-origin:0 0;">Snapshots</div><div class="t" style="left:256px;top:571.84px;font-size:12px;line-height:16px;color:#000;transform:scaleX(0.8938);transform-origin:0 0;">08.10.2019 10:18</div><svg style="left:11px;top:590px" width="16" height="16" viewBox="0 0 16 16"><path d="M8 0.5L15 3.5V12L8 15.5L1 12V3.5Z" fill="#1a6fd0"/><path d="M8 7L15 3.5V12L8 15.5Z" fill="#0d4f9e"/><path d="M8 0.5L15 3.5L8 7L1 3.5Z" fill="#7cc8ff"/></svg><div class="t" style="left:29px;top:590.84px;font-size:12px;line-height:16px;color:#000;transform:scaleX(0.9764);transform-origin:0 0;">Ubuntu 16.04.6 (32-bit).vbox</div><div class="t" style="left:256px;top:590.84px;font-size:12px;line-height:16px;color:#000;transform:scaleX(0.8922);transform-origin:0 0;">08.10.2019 9:12</div><svg style="left:13px;top:609px" width="13" height="16" viewBox="0 0 13 16"><path d="M0.5 0.5H9L12.5 4V15.5H0.5Z" fill="#fafafa" stroke="#8a8a8a"/></svg><div class="t" style="left:29px;top:609.84px;font-size:12px;line-height:16px;color:#000;transform:scaleX(0.9886);transform-origin:0 0;">Ubuntu 16.04.6 (32-bit).vbox-prev</div><div class="t" style="left:256px;top:609.84px;font-size:12px;line-height:16px;color:#000;transform:scaleX(0.8922);transform-origin:0 0;">08.10.2019 9:12</div><svg style="left:11px;top:628px" width="16" height="16" viewBox="0 0 16 16"><path d="M8 0.5L15 3.5V12L8 15.5L1 12V3.5Z" fill="#e0502a"/><path d="M8 7L15 3.5V12L8 15.5Z" fill="#b0301a"/><path d="M8 0.5L15 3.5L8 7L1 3.5Z" fill="#ff9a6a"/></svg><div class="t" style="left:29px;top:628.84px;font-size:12px;line-height:16px;color:#000;transform:scaleX(0.9884);transform-origin:0 0;">Ubuntu 16.vdi</div><div class="t" style="left:256px;top:628.84px;font-size:12px;line-height:16px;color:#000;transform:scaleX(0.8922);transform-origin:0 0;">08.10.2019 9:12</div><div style="left:2px;top:850px;width:695px;height:16px;background:#f0f0f0;"></div><div style="left:20px;top:850px;width:657px;height:15px;background:#cdcdcd;"></div><svg style="left:8px;top:854px" width="6" height="8" viewBox="0 0 6 8"><path d="M5 0.8L1.5 4L5 7.2" stroke="#505050" stroke-width="1.9" fill="none"/></svg><svg style="left:684px;top:854px" width="6" height="8" viewBox="0 0 6 8"><path d="M1 0.8L4.5 4L1 7.2" stroke="#505050" stroke-width="1.9" fill="none"/></svg><div style="left:2px;top:866px;width:695px;height:1px;background:#fbfbfb;"></div><div style="left:2px;top:867px;width:695px;height:22px;background:#f0f0f0;"></div><svg style="left:8px;top:873px" width="10" height="10" viewBox="0 0 10 10"><path d="M9 1.5V0.5H0.8L4.6 4.8L0.8 9.2H9V8.5" stroke="#8a8a8a" stroke-width="1" fill="none"/></svg><div class="t" style="left:25px;top:869.84px;font-size:12px;line-height:16px;color:#000;transform:scaleX(0.9500);transform-origin:0 0;">5 Элемент(ов)</div><svg style="left:108px;top:876px" width="7" height="4" viewBox="0 0 7 4" shape-rendering="crispEdges"><rect x="0" y="0" width="7" height="1" fill="#222"/><rect x="1" y="1" width="5" height="1" fill="#222"/><rect x="2" y="2" width="3" height="1" fill="#222"/><rect x="3" y="3" width="1" height="1" fill="#222"/></svg><svg style="left:676px;top:869px" width="17" height="17" viewBox="-1 -1 17 17" shape-rendering="crispEdges"><rect width="15" height="15" fill="#9a9a9a"/><rect x="1" y="1" width="1" height="1" fill="#fff"/><rect x="3" y="1" width="1" height="1" fill="#fff"/><rect x="5" y="1" width="1" height="1" fill="#fff"/><rect x="7" y="1" width="1" height="1" fill="#fff"/><rect x="9" y="1" width="1" height="1" fill="#fff"/><rect x="11" y="1" width="1" height="1" fill="#fff"/><rect x="13" y="1" width="1" height="1" fill="#fff"/><rect x="1" y="3" width="1" height="1" fill="#fff"/><rect x="3" y="3" width="1" height="1" fill="#000"/><rect x="5" y="3" width="1" height="1" fill="#000"/><rect x="7" y="3" width="1" height="1" fill="#000"/><rect x="9" y="3" width="1" height="1" fill="#000"/><rect x="11" y="3" width="1" height="1" fill="#000"/><rect x="13" y="3" width="1" height="1" fill="#fff"/><rect x="1" y="5" width="1" height="1" fill="#fff"/><rect x="3" y="5" width="1" height="1" fill="#000"/><rect x="5" y="5" width="1" height="1" fill="#fff"/><rect x="7" y="5" width="1" height="1" fill="#fff"/><rect x="9" y="5" width="1" height="1" fill="#fff"/><rect x="11" y="5" width="1" height="1" fill="#000"/><rect x="13" y="5" width="1" height="1" fill="#fff"/><rect x="1" y="7" width="1" height="1" fill="#fff"/><rect x="3" y="7" width="1" height="1" fill="#000"/><rect x="5" y="7" width="1" height="1" fill="#fff"/><rect x="7" y="7" width="1" height="1" fill="#fff"/><rect x="9" y="7" width="1" height="1" fill="#fff"/><rect x="11" y="7" width="1" height="1" fill="#000"/><rect x="13" y="7" width="1" height="1" fill="#fff"/><rect x="1" y="9" width="1" height="1" fill="#fff"/><rect x="3" y="9" width="1" height="1" fill="#000"/><rect x="5" y="9" width="1" height="1" fill="#fff"/><rect x="7" y="9" width="1" height="1" fill="#fff"/><rect x="9" y="9" width="1" height="1" fill="#000"/><rect x="11" y="9" width="1" height="1" fill="#000"/><rect x="13" y="9" width="1" height="1" fill="#fff"/><rect x="1" y="11" width="1" height="1" fill="#fff"/><rect x="3" y="11" width="1" height="1" fill="#000"/><rect x="5" y="11" width="1" height="1" fill="#000"/><rect x="7" y="11" width="1" height="1" fill="#000"/><rect x="9" y="11" width="1" height="1" fill="#000"/><rect x="11" y="11" width="1" height="1" fill="#000"/><rect x="13" y="11" width="1" height="1" fill="#fff"/><rect x="1" y="13" width="1" height="1" fill="#fff"/><rect x="3" y="13" width="1" height="1" fill="#fff"/><rect x="5" y="13" width="1" height="1" fill="#fff"/><rect x="7" y="13" width="1" height="1" fill="#fff"/><rect x="9" y="13" width="1" height="1" fill="#fff"/><rect x="11" y="13" width="1" height="1" fill="#fff"/><rect x="13" y="13" width="1" height="1" fill="#000"/></svg><svg style="left:654px;top:870px" width="17" height="16" viewBox="0 0 17 16"><path d="M3.5 10.5L12 2L15 5L6.5 13.5L3 14Z" fill="#fff" stroke="#000" stroke-width="1.3"/><path d="M6 10L10.5 5.5" stroke="#2a6ae0" stroke-width="1.8"/><path d="M10.5 5.5L12.5 3.5" stroke="#e22" stroke-width="1.8"/><path d="M5 11.5L6 10.5" stroke="#2a2" stroke-width="1.5"/><rect x="0" y="11" width="16" height="5" fill="#aaa"/><path d="M1.5 12.5H3.5M5.5 12.5H7.5M11.5 12.5H13.5M1.5 14.5H3.5M5.5 14.5H7.5M11.5 14.5H13.5" stroke="#fff"/></svg><div style="left:645px;top:869px;width:1px;height:18px;background:#777;"></div><svg style="left:624px;top:870px" width="14" height="15" viewBox="0 0 14 15"><rect x="1" y="2" width="12" height="12.5" fill="#fff" stroke="#7a4a1a" stroke-width="1.6"/><rect x="4" y="0.5" width="6" height="3" fill="#888"/><path d="M3.5 6.5H10.5M3.5 8.5H10.5M3.5 10.5H10.5M3.5 12.5H10.5" stroke="#5a8ad0"/></svg><svg style="left:601px;top:870px" width="15" height="17" viewBox="0 0 15 17"><path d="M0.5 0.5H6.5L9.5 3.5V11.5H0.5Z" fill="#fff" stroke="#999"/><path d="M2 4.5H6M2 6.5H7M2 8.5H7" stroke="#5a8ad0"/><path d="M5.5 5.5H11.5L14.5 8.5V16.5H5.5Z" fill="#fff" stroke="#999"/><path d="M7 10.5H13M7 12.5H13M7 14.5H13" stroke="#3a7ad0"/></svg><svg style="left:580px;top:870px" width="12" height="17" viewBox="0 0 12 17"><path d="M2.5 0L7 11M9.5 0L5 11" stroke="#8a8a8a" stroke-width="1.3"/><circle cx="3.2" cy="13.3" r="2.4" fill="none" stroke="#1e7fd8" stroke-width="1.5"/><circle cx="8.8" cy="13.3" r="2.4" fill="none" stroke="#1e7fd8" stroke-width="1.5"/></svg><div style="left:569px;top:869px;width:1px;height:18px;background:#777;"></div><svg style="left:548px;top:872px" width="14" height="13" viewBox="0 0 14 13"><path d="M1.5 1L12.5 12M12.5 1L1.5 12" stroke="#d81b1b" stroke-width="3.2"/></svg><svg style="left:523px;top:873px" width="17" height="11" viewBox="0 0 17 11"><rect x="0.5" y="0.5" width="15.5" height="9.5" fill="#f8f8f8" stroke="#9a9a9a"/><path d="M2.5 3.5H7.5M5 6.5H12" stroke="#9a9a9a"/><rect x="12" y="2" width="2" height="2" fill="#3a8ad8"/></svg><svg style="left:501px;top:870px" width="14" height="17" viewBox="0 0 14 17"><path d="M5.5 1.5H12.5L9.5 5H12L7 10H9.5L3 16L4.5 11H1.5L5 7H2Z" fill="#999" transform="translate(1 0.7)"/><path d="M5.5 1.5H12.5L9.5 5H12L7 10H9.5L3 16L4.5 11H1.5L5 7H2Z" fill="#fff" stroke="#000" stroke-width="1.3" stroke-linejoin="round"/></svg><div style="left:703px;top:476px;width:696px;height:1px;background:#a0a0a0;"></div><div style="left:703px;top:476px;width:1px;height:413px;background:#a0a0a0;"></div><div style="left:704px;top:477px;width:695px;height:1px;background:#f8f8f8;"></div><div style="left:704px;top:477px;width:1px;height:412px;background:#f8f8f8;"></div><div style="left:705px;top:478px;width:694px;height:24px;background:#f0f0f0;"></div><svg style="left:707px;top:481px" width="16" height="16" viewBox="0 0 16 16"><defs><radialGradient id="gb" cx="0.4" cy="0.3" r="0.8"><stop offset="0" stop-color="#8fd0ff"/><stop offset="0.6" stop-color="#1f6fc0"/><stop offset="1" stop-color="#0b3f80"/></radialGradient><radialGradient id="gg" cx="0.4" cy="0.3" r="0.8"><stop offset="0" stop-color="#d8d8d8"/><stop offset="0.6" stop-color="#6a6a6a"/><stop offset="1" stop-color="#333"/></radialGradient></defs><circle cx="8" cy="8" r="7.5" fill="url(#gb)"/><path d="M12 8H5M8 4.5L4.5 8L8 11.5" stroke="#fff" stroke-width="2" fill="none"/></svg><svg style="left:730px;top:481px" width="16" height="16" viewBox="0 0 16 16"><circle cx="8" cy="8" r="7.5" fill="url(#gg)"/><path d="M4 8H11M8 4.5L11.5 8L8 11.5" stroke="#fff" stroke-width="2" fill="none"/></svg><svg style="left:753px;top:479px" width="16" height="19" viewBox="0 0 16 19"><path d="M1.5 17.5V6.5H6L7 7.5H11.5V10" fill="#fbe39a" stroke="#d8a436"/><path d="M1.5 17.5L4.5 10.5H15L11.5 16.5Z" fill="#fdeeb5" stroke="#d8a436"/><path d="M8.2 15.5Q10 11 9.3 6" stroke="#1e8c1e" stroke-width="3" fill="none"/><path d="M8.6 15Q9.8 11 9.4 7" stroke="#6ad84a" stroke-width="1" fill="none"/><path d="M5 7.5L9.3 1L14.5 6.5Z" fill="#1e8c1e"/></svg><svg style="left:777px;top:481px" width="17" height="16" viewBox="0 0 17 16"><path d="M1.5 14.5V3.5H6L7 4.5H11.5V7" fill="#fbe39a" stroke="#d8a436"/><path d="M1.5 14.5L4.5 7.5H13L10.5 13.5Z" fill="#fdeeb5" stroke="#d8a436"/><path d="M12.8 1.5L13.6 3.5L15.6 3L14.8 5L16.5 6.2L14.6 7L15 9L13 8.2L11.8 9.8L11.2 7.8L9.2 7.6L10.5 6L9.3 4.3L11.4 4.2Z" fill="#ff4a10"/><circle cx="12.9" cy="5.8" r="1.5" fill="#ffe060"/></svg><svg style="left:801px;top:481px" width="16" height="15" viewBox="0 0 16 15"><rect x="0.5" y="0.5" width="15" height="14" fill="#fff" stroke="#1f5fb8"/><rect x="0.5" y="0.5" width="15" height="2.5" fill="#1f5fb8"/><rect x="3" y="5" width="2" height="2" fill="#88a"/><rect x="7" y="5" width="2" height="2" fill="#66c"/><rect x="11" y="5" width="2" height="2" fill="#2a2"/><rect x="3" y="9" width="2" height="2" fill="#e33"/><rect x="7" y="9" width="2" height="2" fill="#23a"/><rect x="11" y="9" width="2" height="2" fill="#ca3"/></svg><svg style="left:823px;top:486px" width="7" height="4" viewBox="0 0 7 4" shape-rendering="crispEdges"><rect x="0" y="0" width="7" height="1" fill="#222"/><rect x="1" y="1" width="5" height="1" fill="#222"/><rect x="2" y="2" width="3" height="1" fill="#222"/><rect x="3" y="3" width="1" height="1" fill="#222"/></svg><svg style="left:837px;top:481px" width="16" height="16" viewBox="0 0 16 16"><path d="M2.5 7A5.5 5.5 0 0 1 12.5 4.5" stroke="#2a8ee8" stroke-width="2.6" fill="none"/><path d="M10 1.5L15 2L14 7Z" fill="#2a8ee8"/><path d="M13.5 9A5.5 5.5 0 0 1 3.5 11.5" stroke="#2a8ee8" stroke-width="2.6" fill="none"/><path d="M6 14.5L1 14L2 9Z" fill="#2a8ee8"/></svg><div style="left:860px;top:477px;width:463px;height:24px;background:#fff;border:1px solid #7a7a7a;box-sizing:border-box;"></div><svg style="left:864px;top:481px" width="14" height="16" viewBox="0 0 14 16"><path d="M0.5 0.5H12.5V9.5H13.5V15.5H0.5Z" fill="#fde39a" stroke="#e8c35a"/><path d="M10.5 9.5H12.5V15.5H10.5Z" fill="#fde39a" stroke="#e8c35a"/></svg><div class="t" style="left:885px;top:481.84px;font-size:12px;line-height:16px;color:#000;transform:scaleX(0.8575);transform-origin:0 0;">C:\Program Files\TeamSpeak 3 Client\</div><svg style="left:1311px;top:487px" width="9" height="5" viewBox="0 0 9 5"><path d="M0.5 0.5L4.5 4.5L8.5 0.5" stroke="#444" fill="none"/></svg><div style="left:1323px;top:477px;width:75px;height:24px;background:#aacbe8;"></div><svg style="left:1330px;top:482px" width="17" height="13" viewBox="0 0 17 13"><defs><linearGradient id="mon1" x1="0" y1="0" x2="1" y2="1"><stop offset="0" stop-color="#0a8ef4"/><stop offset="0.5" stop-color="#2aa8ff"/><stop offset="1" stop-color="#0a8ef4"/></linearGradient></defs><rect x="0.5" y="0.5" width="15.5" height="11.5" fill="url(#mon1)" stroke="#0b6cc8"/><rect x="1" y="10" width="15" height="2" fill="#0b4f98"/><rect x="1.5" y="10.5" width="1" height="1" fill="#fff"/><rect x="12.5" y="10.5" width="1" height="1" fill="#fff"/><rect x="14.5" y="10.5" width="1" height="1" fill="#fff"/></svg><svg style="left:1350px;top:486px" width="7" height="4" viewBox="0 0 7 4" shape-rendering="crispEdges"><rect x="0" y="0" width="7" height="1" fill="#222"/><rect x="1" y="1" width="5" height="1" fill="#222"/><rect x="2" y="2" width="3" height="1" fill="#222"/><rect x="3" y="3" width="1" height="1" fill="#222"/></svg><svg style="left:1368px;top:481px" width="17" height="15" viewBox="0 0 17 15"><defs><linearGradient id="mon2" x1="0" y1="0" x2="1" y2="1"><stop offset="0" stop-color="#8ed4ff"/><stop offset="0.5" stop-color="#5cc0ff"/><stop offset="1" stop-color="#3aa8f0"/></linearGradient></defs><rect x="0.5" y="0.5" width="15.5" height="9.5" fill="url(#mon2)" stroke="#2a7ab8"/><rect x="6" y="11" width="5" height="1" fill="#7a9ac0"/><rect x="0.5" y="13.5" width="15.5" height="1.2" fill="#9ab0c8"/></svg><svg style="left:1388px;top:486px" width="7" height="4" viewBox="0 0 7 4" shape-rendering="crispEdges"><rect x="0" y="0" width="7" height="1" fill="#222"/><rect x="1" y="1" width="5" height="1" fill="#222"/><rect x="2" y="2" width="3" height="1" fill="#222"/><rect x="3" y="3" width="1" height="1" fill="#222"/></svg><div style="left:704px;top:502px;width:695px;height:1px;background:#a0a0a0;"></div><div style="left:704px;top:501px;width:695px;height:1px;background:#f8f8f8;"></div><div style="left:704px;top:503px;width:695px;height:22px;background:#f0f0f0;"></div><div style="left:704px;top:503px;width:695px;height:1px;background:#f6f6f6;"></div><div style="left:705px;top:504px;width:130px;height:22px;background:#fff;"></div><div style="left:835px;top:504px;width:1px;height:22px;background:#dcdcdc;"></div><div style="left:836px;top:525px;width:560px;height:1px;background:#dadada;"></div><svg style="left:715px;top:505px" width="14" height="16" viewBox="0 0 14 16"><path d="M0.5 0.5H12.5V9.5H13.5V15.5H0.5Z" fill="#fde39a" stroke="#e8c35a"/><path d="M10.5 9.5H12.5V15.5H10.5Z" fill="#fde39a" stroke="#e8c35a"/></svg><div class="t" style="left:735px;top:505.84px;font-size:12px;line-height:16px;color:#000;transform:scaleX(0.9706);transform-origin:0 0;">TeamSpeak 3 Client</div><div style="left:704px;top:526px;width:695px;height:340px;background:#fff;"></div><div style="left:704px;top:866px;width:695px;height:23px;background:#aacbe8;"></div><div style="left:1065px;top:528px;width:1px;height:22px;background:#e5e5e5;"></div><svg style="left:710px;top:556px" width="14" height="16" viewBox="0 0 14 16"><path d="M0.5 0.5H12.5V9.5H13.5V15.5H0.5Z" fill="#fde39a" stroke="#e8c35a"/><path d="M10.5 9.5H12.5V15.5H10.5Z" fill="#fde39a" stroke="#e8c35a"/></svg><div class="t" style="left:727px;top:556.84px;font-size:12px;line-height:16px;color:#000;transform:scaleX(0.9850);transform-origin:0 0;width:237px;overflow:hidden;">bearer</div><svg style="left:710px;top:573px" width="14" height="16" viewBox="0 0 14 16"><path d="M0.5 0.5H12.5V9.5H13.5V15.5H0.5Z" fill="#fde39a" stroke="#e8c35a"/><path d="M10.5 9.5H12.5V15.5H10.5Z" fill="#fde39a" stroke="#e8c35a"/></svg><div class="t" style="left:727px;top:573.84px;font-size:12px;line-height:16px;color:#000;transform:scaleX(0.9850);transform-origin:0 0;width:237px;overflow:hidden;">config</div><svg style="left:710px;top:590px" width="14" height="16" viewBox="0 0 14 16"><path d="M0.5 0.5H12.5V9.5H13.5V15.5H0.5Z" fill="#fde39a" stroke="#e8c35a"/><path d="M10.5 9.5H12.5V15.5H10.5Z" fill="#fde39a" stroke="#e8c35a"/></svg><div class="t" style="left:727px;top:590.84px;font-size:12px;line-height:16px;color:#000;transform:scaleX(0.9850);transform-origin:0 0;width:237px;overflow:hidden;">gfx</div><svg style="left:710px;top:607px" width="14" height="16" viewBox="0 0 14 16"><path d="M0.5 0.5H12.5V9.5H13.5V15.5H0.5Z" fill="#fde39a" stroke="#e8c35a"/><path d="M10.5 9.5H12.5V15.5H10.5Z" fill="#fde39a" stroke="#e8c35a"/></svg><div class="t" style="left:727px;top:607.84px;font-size:12px;line-height:16px;color:#000;transform:scaleX(0.9850);transform-origin:0 0;width:237px;overflow:hidden;">html</div><svg style="left:710px;top:624px" width="14" height="16" viewBox="0 0 14 16"><path d="M0.5 0.5H12.5V9.5H13.5V15.5H0.5Z" fill="#fde39a" stroke="#e8c35a"/><path d="M10.5 9.5H12.5V15.5H10.5Z" fill="#fde39a" stroke="#e8c35a"/></svg><div class="t" style="left:727px;top:624.84px;font-size:12px;line-height:16px;color:#000;transform:scaleX(0.9850);transform-origin:0 0;width:237px;overflow:hidden;">iconengines</div><svg style="left:710px;top:641px" width="14" height="16" viewBox="0 0 14 16"><path d="M0.5 0.5H12.5V9.5H13.5V15.5H0.5Z" fill="#fde39a" stroke="#e8c35a"/><path d="M10.5 9.5H12.5V15.5H10.5Z" fill="#fde39a" stroke="#e8c35a"/></svg><div class="t" style="left:727px;top:641.84px;font-size:12px;line-height:16px;color:#000;transform:scaleX(0.9850);transform-origin:0 0;width:237px;overflow:hidden;">imageformats</div><svg style="left:710px;top:658px" width="14" height="16" viewBox="0 0 14 16"><path d="M0.5 0.5H12.5V9.5H13.5V15.5H0.5Z" fill="#fde39a" stroke="#e8c35a"/><path d="M10.5 9.5H12.5V15.5H10.5Z" fill="#fde39a" stroke="#e8c35a"/></svg><div class="t" style="left:727px;top:658.84px;font-size:12px;line-height:16px;color:#000;transform:scaleX(0.9850);transform-origin:0 0;width:237px;overflow:hidden;">platforms</div><svg style="left:710px;top:675px" width="14" height="16" viewBox="0 0 14 16"><path d="M0.5 0.5H12.5V9.5H13.5V15.5H0.5Z" fill="#fde39a" stroke="#e8c35a"/><path d="M10.5 9.5H12.5V15.5H10.5Z" fill="#fde39a" stroke="#e8c35a"/></svg><div class="t" style="left:727px;top:675.84px;font-size:12px;line-height:16px;color:#000;transform:scaleX(0.9850);transform-origin:0 0;width:237px;overflow:hidden;">plugins</div><svg style="left:710px;top:692px" width="14" height="16" viewBox="0 0 14 16"><path d="M0.5 0.5H12.5V9.5H13.5V15.5H0.5Z" fill="#fde39a" stroke="#e8c35a"/><path d="M10.5 9.5H12.5V15.5H10.5Z" fill="#fde39a" stroke="#e8c35a"/></svg><div class="t" style="left:727px;top:692.84px;font-size:12px;line-height:16px;color:#000;transform:scaleX(0.9850);transform-origin:0 0;width:237px;overflow:hidden;">soundbackends</div><svg style="left:710px;top:709px" width="14" height="16" viewBox="0 0 14 16"><path d="M0.5 0.5H12.5V9.5H13.5V15.5H0.5Z" fill="#fde39a" stroke="#e8c35a"/><path d="M10.5 9.5H12.5V15.5H10.5Z" fill="#fde39a" stroke="#e8c35a"/></svg><div class="t" style="left:727px;top:709.84px;font-size:12px;line-height:16px;color:#000;transform:scaleX(0.9850);transform-origin:0 0;width:237px;overflow:hidden;">sqldrivers</div><svg style="left:710px;top:726px" width="14" height="16" viewBox="0 0 14 16"><path d="M0.5 0.5H12.5V9.5H13.5V15.5H0.5Z" fill="#fde39a" stroke="#e8c35a"/><path d="M10.5 9.5H12.5V15.5H10.5Z" fill="#fde39a" stroke="#e8c35a"/></svg><div class="t" style="left:727px;top:726.84px;font-size:12px;line-height:16px;color:#000;transform:scaleX(0.9850);transform-origin:0 0;width:237px;overflow:hidden;">styles</div><svg style="left:710px;top:743px" width="14" height="16" viewBox="0 0 14 16"><path d="M0.5 0.5H12.5V9.5H13.5V15.5H0.5Z" fill="#fde39a" stroke="#e8c35a"/><path d="M10.5 9.5H12.5V15.5H10.5Z" fill="#fde39a" stroke="#e8c35a"/></svg><div class="t" style="left:727px;top:743.84px;font-size:12px;line-height:16px;color:#000;transform:scaleX(0.9850);transform-origin:0 0;width:237px;overflow:hidden;">translations</div><svg style="left:709px;top:761px" width="16" height="14" viewBox="0 0 16 14"><rect x="0.5" y="0.5" width="15" height="13" fill="#fff" stroke="#888"/><rect x="0.5" y="0.5" width="15" height="2" fill="#aaa"/><rect x="3" y="5" width="5" height="6" fill="#1a6fd0"/><path d="M10 6H14M10 8H14M10 10H14" stroke="#888"/></svg><div class="t" style="left:727px;top:760.84px;font-size:12px;line-height:16px;color:#000;transform:scaleX(0.9702);transform-origin:0 0;width:237px;overflow:hidden;">addon_mover_32.exe</div><svg style="left:709px;top:777px" width="16" height="16" viewBox="0 0 16 16"><rect x="1.5" y="1.5" width="13" height="14" rx="1" fill="#8ed08a" stroke="#5a9a5a"/><path d="M2 1.5H14" stroke="#444" stroke-dasharray="1 1"/><path d="M3.5 5H12.5M3.5 7.5H12.5M3.5 10H12.5M3.5 12.5H12.5" stroke="#c8f0c0"/></svg><div class="t" style="left:727px;top:777.84px;font-size:12px;line-height:16px;color:#000;transform:scaleX(0.9795);transform-origin:0 0;width:237px;overflow:hidden;">changelog.txt</div><svg style="left:709px;top:794px" width="16" height="16" viewBox="0 0 16 16"><defs><radialGradient id="ts3g" cx="0.4" cy="0.35" r="0.7"><stop offset="0" stop-color="#3a6e9e"/><stop offset="1" stop-color="#173f66"/></radialGradient></defs><circle cx="8" cy="8" r="7.6" fill="url(#ts3g)"/><path d="M3.6 9.5Q3.2 3.5 8 3.5Q12.8 3.5 12.4 9.5" stroke="#e8eef4" stroke-width="1.3" fill="none"/><ellipse cx="5" cy="9.6" rx="1.4" ry="1.1" fill="#e8eef4"/><ellipse cx="11" cy="9.6" rx="1.4" ry="1.1" fill="#e8eef4"/><path d="M11 11Q10 12.8 7.5 12.6" stroke="#e8eef4" stroke-width="1" fill="none"/></svg><div class="t" style="left:727px;top:794.84px;font-size:12px;line-height:16px;color:#000;transform:scaleX(0.9812);transform-origin:0 0;width:237px;overflow:hidden;">createfileassoc.exe</div><svg style="left:711px;top:811px" width="13" height="16" viewBox="0 0 13 16"><path d="M0.5 0.5H8.5L11.5 3.5V15.5H0.5Z" fill="#f8f8f8" stroke="#8a8a8a"/><path d="M8.5 0.5V3.5H11.5" fill="none" stroke="#aaa"/><circle cx="5" cy="6.5" r="2.6" fill="none" stroke="#a0a0a0" stroke-width="1.2" stroke-dasharray="1.2 0.8"/><circle cx="5" cy="6.5" r="1" fill="#c8c8c8"/><circle cx="8" cy="10.5" r="2" fill="#cfe3f7" stroke="#6aa8e0" stroke-width="1" stroke-dasharray="1 0.6"/></svg><div class="t" style="left:727px;top:811.84px;font-size:12px;line-height:16px;color:#000;transform:scaleX(0.9614);transform-origin:0 0;width:237px;overflow:hidden;">d3dcompiler_47.dll</div><svg style="left:709px;top:828px" width="16" height="16" viewBox="0 0 16 16"><defs><radialGradient id="ts3g" cx="0.4" cy="0.35" r="0.7"><stop offset="0" stop-color="#3a6e9e"/><stop offset="1" stop-color="#173f66"/></radialGradient></defs><circle cx="8" cy="8" r="7.6" fill="url(#ts3g)"/><path d="M3.6 9.5Q3.2 3.5 8 3.5Q12.8 3.5 12.4 9.5" stroke="#e8eef4" stroke-width="1.3" fill="none"/><ellipse cx="5" cy="9.6" rx="1.4" ry="1.1" fill="#e8eef4"/><ellipse cx="11" cy="9.6" rx="1.4" ry="1.1" fill="#e8eef4"/><path d="M11 11Q10 12.8 7.5 12.6" stroke="#e8eef4" stroke-width="1" fill="none"/></svg><div class="t" style="left:727px;top:828.84px;font-size:12px;line-height:16px;color:#000;transform:scaleX(0.9804);transform-origin:0 0;width:237px;overflow:hidden;">error_report.exe</div><svg style="left:955px;top:556px" width="13" height="16" viewBox="0 0 13 16"><path d="M0.5 0.5H8.5L11.5 3.5V15.5H0.5Z" fill="#f8f8f8" stroke="#8a8a8a"/><path d="M8.5 0.5V3.5H11.5" fill="none" stroke="#aaa"/><circle cx="5" cy="6.5" r="2.6" fill="none" stroke="#a0a0a0" stroke-width="1.2" stroke-dasharray="1.2 0.8"/><circle cx="5" cy="6.5" r="1" fill="#c8c8c8"/><circle cx="8" cy="10.5" r="2" fill="#cfe3f7" stroke="#6aa8e0" stroke-width="1" stroke-dasharray="1 0.6"/></svg><div class="t" style="left:971px;top:556.84px;font-size:12px;line-height:16px;color:#000;transform:scaleX(0.9601);transform-origin:0 0;width:235px;overflow:hidden;">libEGL.dll</div><svg style="left:955px;top:573px" width="13" height="16" viewBox="0 0 13 16"><path d="M0.5 0.5H8.5L11.5 3.5V15.5H0.5Z" fill="#f8f8f8" stroke="#8a8a8a"/><path d="M8.5 0.5V3.5H11.5" fill="none" stroke="#aaa"/><circle cx="5" cy="6.5" r="2.6" fill="none" stroke="#a0a0a0" stroke-width="1.2" stroke-dasharray="1.2 0.8"/><circle cx="5" cy="6.5" r="1" fill="#c8c8c8"/><circle cx="8" cy="10.5" r="2" fill="#cfe3f7" stroke="#6aa8e0" stroke-width="1" stroke-dasharray="1 0.6"/></svg><div class="t" style="left:971px;top:573.84px;font-size:12px;line-height:16px;color:#000;transform:scaleX(0.9540);transform-origin:0 0;width:235px;overflow:hidden;">libGLESv2.dll</div><svg style="left:955px;top:590px" width="13" height="16" viewBox="0 0 13 16"><path d="M0.5 0.5H8.5L11.5 3.5V15.5H0.5Z" fill="#f8f8f8" stroke="#8a8a8a"/><path d="M8.5 0.5V3.5H11.5" fill="none" stroke="#aaa"/><circle cx="5" cy="6.5" r="2.6" fill="none" stroke="#a0a0a0" stroke-width="1.2" stroke-dasharray="1.2 0.8"/><circle cx="5" cy="6.5" r="1" fill="#c8c8c8"/><circle cx="8" cy="10.5" r="2" fill="#cfe3f7" stroke="#6aa8e0" stroke-width="1" stroke-dasharray="1 0.6"/></svg><div class="t" style="left:971px;top:590.84px;font-size:12px;line-height:16px;color:#000;transform:scaleX(0.9511);transform-origin:0 0;width:235px;overflow:hidden;">msvcp140.dll</div><svg style="left:955px;top:607px" width="13" height="16" viewBox="0 0 13 16"><path d="M0.5 0.5H8.5L11.5 3.5V15.5H0.5Z" fill="#f8f8f8" stroke="#8a8a8a"/><path d="M8.5 0.5V3.5H11.5" fill="none" stroke="#aaa"/><circle cx="5" cy="6.5" r="2.6" fill="none" stroke="#a0a0a0" stroke-width="1.2" stroke-dasharray="1.2 0.8"/><circle cx="5" cy="6.5" r="1" fill="#c8c8c8"/><circle cx="8" cy="10.5" r="2" fill="#cfe3f7" stroke="#6aa8e0" stroke-width="1" stroke-dasharray="1 0.6"/></svg><div class="t" style="left:971px;top:607.84px;font-size:12px;line-height:16px;color:#000;transform:scaleX(0.9553);transform-origin:0 0;width:235px;overflow:hidden;">Qt5Bus.dll</div><svg style="left:955px;top:624px" width="13" height="16" viewBox="0 0 13 16"><path d="M0.5 0.5H8.5L11.5 3.5V15.5H0.5Z" fill="#f8f8f8" stroke="#8a8a8a"/><path d="M8.5 0.5V3.5H11.5" fill="none" stroke="#aaa"/><circle cx="5" cy="6.5" r="2.6" fill="none" stroke="#a0a0a0" stroke-width="1.2" stroke-dasharray="1.2 0.8"/><circle cx="5" cy="6.5" r="1" fill="#c8c8c8"/><circle cx="8" cy="10.5" r="2" fill="#cfe3f7" stroke="#6aa8e0" stroke-width="1" stroke-dasharray="1 0.6"/></svg><div class="t" style="left:971px;top:624.84px;font-size:12px;line-height:16px;color:#000;transform:scaleX(0.9547);transform-origin:0 0;width:235px;overflow:hidden;">Qt5DBus.dll</div><svg style="left:955px;top:641px" width="13" height="16" viewBox="0 0 13 16"><path d="M0.5 0.5H8.5L11.5 3.5V15.5H0.5Z" fill="#f8f8f8" stroke="#8a8a8a"/><path d="M8.5 0.5V3.5H11.5" fill="none" stroke="#aaa"/><circle cx="5" cy="6.5" r="2.6" fill="none" stroke="#a0a0a0" stroke-width="1.2" stroke-dasharray="1.2 0.8"/><circle cx="5" cy="6.5" r="1" fill="#c8c8c8"/><circle cx="8" cy="10.5" r="2" fill="#cfe3f7" stroke="#6aa8e0" stroke-width="1" stroke-dasharray="1 0.6"/></svg><div class="t" style="left:971px;top:641.84px;font-size:12px;line-height:16px;color:#000;transform:scaleX(0.9553);transform-origin:0 0;width:235px;overflow:hidden;">Qt5Xml.dll</div><svg style="left:955px;top:658px" width="13" height="16" viewBox="0 0 13 16"><path d="M0.5 0.5H8.5L11.5 3.5V15.5H0.5Z" fill="#f8f8f8" stroke="#8a8a8a"/><path d="M8.5 0.5V3.5H11.5" fill="none" stroke="#aaa"/><circle cx="5" cy="6.5" r="2.6" fill="none" stroke="#a0a0a0" stroke-width="1.2" stroke-dasharray="1.2 0.8"/><circle cx="5" cy="6.5" r="1" fill="#c8c8c8"/><circle cx="8" cy="10.5" r="2" fill="#cfe3f7" stroke="#6aa8e0" stroke-width="1" stroke-dasharray="1 0.6"/></svg><div class="t" style="left:971px;top:658.84px;font-size:12px;line-height:16px;color:#000;transform:scaleX(1.0034);transform-origin:0 0;width:235px;overflow:hidden;">opengl32sw.dll</div><svg style="left:954px;top:675px" width="13" height="16" viewBox="0 0 13 16"><path d="M0.5 0.5H9L12.5 4V15.5H0.5Z" fill="#fafafa" stroke="#8a8a8a"/></svg><div class="t" style="left:971px;top:675.84px;font-size:12px;line-height:16px;color:#000;transform:scaleX(0.8310);transform-origin:0 0;width:235px;overflow:hidden;">package_manifest.json</div><svg style="left:953px;top:692px" width="16" height="16" viewBox="0 0 16 16"><defs><radialGradient id="ts3g" cx="0.4" cy="0.35" r="0.7"><stop offset="0" stop-color="#3a6e9e"/><stop offset="1" stop-color="#173f66"/></radialGradient></defs><circle cx="8" cy="8" r="7.6" fill="url(#ts3g)"/><path d="M3.6 9.5Q3.2 3.5 8 3.5Q12.8 3.5 12.4 9.5" stroke="#e8eef4" stroke-width="1.3" fill="none"/><ellipse cx="5" cy="9.6" rx="1.4" ry="1.1" fill="#e8eef4"/><ellipse cx="11" cy="9.6" rx="1.4" ry="1.1" fill="#e8eef4"/><path d="M11 11Q10 12.8 7.5 12.6" stroke="#e8eef4" stroke-width="1" fill="none"/></svg><div class="t" style="left:971px;top:692.84px;font-size:12px;line-height:16px;color:#000;transform:scaleX(0.9808);transform-origin:0 0;width:235px;overflow:hidden;">package_inst.exe</div><svg style="left:954px;top:710px" width="15" height="15" viewBox="0.5 0.5 15 15"><circle cx="8" cy="8" r="7" fill="#db4437"/><path d="M8 8L1.5 4.5A7.5 7.5 0 0 0 8 15.5Z" fill="#0f9d58"/><path d="M8 8L14.5 4.5A7.5 7.5 0 0 1 8 15.5Z" fill="#f4b400"/><circle cx="8" cy="8" r="3.5" fill="#fff"/><circle cx="8" cy="8" r="2.6" fill="#4285f4"/></svg><div class="t" style="left:971px;top:709.84px;font-size:12px;line-height:16px;color:#000;transform:scaleX(0.9803);transform-origin:0 0;width:235px;overflow:hidden;">plugin_sdk.html</div><svg style="left:955px;top:726px" width="13" height="16" viewBox="0 0 13 16"><path d="M0.5 0.5H8.5L11.5 3.5V15.5H0.5Z" fill="#f8f8f8" stroke="#8a8a8a"/><path d="M8.5 0.5V3.5H11.5" fill="none" stroke="#aaa"/><circle cx="5" cy="6.5" r="2.6" fill="none" stroke="#a0a0a0" stroke-width="1.2" stroke-dasharray="1.2 0.8"/><circle cx="5" cy="6.5" r="1" fill="#c8c8c8"/><circle cx="8" cy="10.5" r="2" fill="#cfe3f7" stroke="#6aa8e0" stroke-width="1" stroke-dasharray="1 0.6"/></svg><div class="t" style="left:971px;top:726.84px;font-size:12px;line-height:16px;color:#000;transform:scaleX(0.9579);transform-origin:0 0;width:235px;overflow:hidden;">Qt5Core.dll</div><svg style="left:955px;top:743px" width="13" height="16" viewBox="0 0 13 16"><path d="M0.5 0.5H8.5L11.5 3.5V15.5H0.5Z" fill="#f8f8f8" stroke="#8a8a8a"/><path d="M8.5 0.5V3.5H11.5" fill="none" stroke="#aaa"/><circle cx="5" cy="6.5" r="2.6" fill="none" stroke="#a0a0a0" stroke-width="1.2" stroke-dasharray="1.2 0.8"/><circle cx="5" cy="6.5" r="1" fill="#c8c8c8"/><circle cx="8" cy="10.5" r="2" fill="#cfe3f7" stroke="#6aa8e0" stroke-width="1" stroke-dasharray="1 0.6"/></svg><div class="t" style="left:971px;top:743.84px;font-size:12px;line-height:16px;color:#000;transform:scaleX(0.9542);transform-origin:0 0;width:235px;overflow:hidden;">Qt5Gui.dll</div><svg style="left:955px;top:760px" width="13" height="16" viewBox="0 0 13 16"><path d="M0.5 0.5H8.5L11.5 3.5V15.5H0.5Z" fill="#f8f8f8" stroke="#8a8a8a"/><path d="M8.5 0.5V3.5H11.5" fill="none" stroke="#aaa"/><circle cx="5" cy="6.5" r="2.6" fill="none" stroke="#a0a0a0" stroke-width="1.2" stroke-dasharray="1.2 0.8"/><circle cx="5" cy="6.5" r="1" fill="#c8c8c8"/><circle cx="8" cy="10.5" r="2" fill="#cfe3f7" stroke="#6aa8e0" stroke-width="1" stroke-dasharray="1 0.6"/></svg><div class="t" style="left:971px;top:760.84px;font-size:12px;line-height:16px;color:#000;transform:scaleX(0.9641);transform-origin:0 0;width:235px;overflow:hidden;">Qt5Network.dll</div><svg style="left:955px;top:777px" width="13" height="16" viewBox="0 0 13 16"><path d="M0.5 0.5H8.5L11.5 3.5V15.5H0.5Z" fill="#f8f8f8" stroke="#8a8a8a"/><path d="M8.5 0.5V3.5H11.5" fill="none" stroke="#aaa"/><circle cx="5" cy="6.5" r="2.6" fill="none" stroke="#a0a0a0" stroke-width="1.2" stroke-dasharray="1.2 0.8"/><circle cx="5" cy="6.5" r="1" fill="#c8c8c8"/><circle cx="8" cy="10.5" r="2" fill="#cfe3f7" stroke="#6aa8e0" stroke-width="1" stroke-dasharray="1 0.6"/></svg><div class="t" style="left:971px;top:777.84px;font-size:12px;line-height:16px;color:#000;transform:scaleX(0.9674);transform-origin:0 0;width:235px;overflow:hidden;">Qt5Positioning.dll</div><svg style="left:955px;top:794px" width="13" height="16" viewBox="0 0 13 16"><path d="M0.5 0.5H8.5L11.5 3.5V15.5H0.5Z" fill="#f8f8f8" stroke="#8a8a8a"/><path d="M8.5 0.5V3.5H11.5" fill="none" stroke="#aaa"/><circle cx="5" cy="6.5" r="2.6" fill="none" stroke="#a0a0a0" stroke-width="1.2" stroke-dasharray="1.2 0.8"/><circle cx="5" cy="6.5" r="1" fill="#c8c8c8"/><circle cx="8" cy="10.5" r="2" fill="#cfe3f7" stroke="#6aa8e0" stroke-width="1" stroke-dasharray="1 0.6"/></svg><div class="t" style="left:971px;top:794.84px;font-size:12px;line-height:16px;color:#000;transform:scaleX(0.9659);transform-origin:0 0;width:235px;overflow:hidden;">Qt5PrintSupport.dll</div><svg style="left:955px;top:811px" width="13" height="16" viewBox="0 0 13 16"><path d="M0.5 0.5H8.5L11.5 3.5V15.5H0.5Z" fill="#f8f8f8" stroke="#8a8a8a"/><path d="M8.5 0.5V3.5H11.5" fill="none" stroke="#aaa"/><circle cx="5" cy="6.5" r="2.6" fill="none" stroke="#a0a0a0" stroke-width="1.2" stroke-dasharray="1.2 0.8"/><circle cx="5" cy="6.5" r="1" fill="#c8c8c8"/><circle cx="8" cy="10.5" r="2" fill="#cfe3f7" stroke="#6aa8e0" stroke-width="1" stroke-dasharray="1 0.6"/></svg><div class="t" style="left:971px;top:811.84px;font-size:12px;line-height:16px;color:#000;transform:scaleX(0.9560);transform-origin:0 0;width:235px;overflow:hidden;">Qt5Qml.dll</div><svg style="left:955px;top:828px" width="13" height="16" viewBox="0 0 13 16"><path d="M0.5 0.5H8.5L11.5 3.5V15.5H0.5Z" fill="#f8f8f8" stroke="#8a8a8a"/><path d="M8.5 0.5V3.5H11.5" fill="none" stroke="#aaa"/><circle cx="5" cy="6.5" r="2.6" fill="none" stroke="#a0a0a0" stroke-width="1.2" stroke-dasharray="1.2 0.8"/><circle cx="5" cy="6.5" r="1" fill="#c8c8c8"/><circle cx="8" cy="10.5" r="2" fill="#cfe3f7" stroke="#6aa8e0" stroke-width="1" stroke-dasharray="1 0.6"/></svg><div class="t" style="left:971px;top:828.84px;font-size:12px;line-height:16px;color:#000;transform:scaleX(0.9598);transform-origin:0 0;width:235px;overflow:hidden;">Qt5Quick.dll</div><svg style="left:1199px;top:556px" width="13" height="16" viewBox="0 0 13 16"><path d="M0.5 0.5H8.5L11.5 3.5V15.5H0.5Z" fill="#f8f8f8" stroke="#8a8a8a"/><path d="M8.5 0.5V3.5H11.5" fill="none" stroke="#aaa"/><circle cx="5" cy="6.5" r="2.6" fill="none" stroke="#a0a0a0" stroke-width="1.2" stroke-dasharray="1.2 0.8"/><circle cx="5" cy="6.5" r="1" fill="#c8c8c8"/><circle cx="8" cy="10.5" r="2" fill="#cfe3f7" stroke="#6aa8e0" stroke-width="1" stroke-dasharray="1 0.6"/></svg><div class="t" style="left:1215px;top:556.84px;font-size:12px;line-height:16px;color:#000;transform:scaleX(0.9671);transform-origin:0 0;width:188px;overflow:hidden;">Qt5QuickWidgets.dll</div><svg style="left:1199px;top:573px" width="13" height="16" viewBox="0 0 13 16"><path d="M0.5 0.5H8.5L11.5 3.5V15.5H0.5Z" fill="#f8f8f8" stroke="#8a8a8a"/><path d="M8.5 0.5V3.5H11.5" fill="none" stroke="#aaa"/><circle cx="5" cy="6.5" r="2.6" fill="none" stroke="#a0a0a0" stroke-width="1.2" stroke-dasharray="1.2 0.8"/><circle cx="5" cy="6.5" r="1" fill="#c8c8c8"/><circle cx="8" cy="10.5" r="2" fill="#cfe3f7" stroke="#6aa8e0" stroke-width="1" stroke-dasharray="1 0.6"/></svg><div class="t" style="left:1215px;top:573.84px;font-size:12px;line-height:16px;color:#000;transform:scaleX(0.9534);transform-origin:0 0;width:188px;overflow:hidden;">Qt5Sql.dll</div><svg style="left:1199px;top:590px" width="13" height="16" viewBox="0 0 13 16"><path d="M0.5 0.5H8.5L11.5 3.5V15.5H0.5Z" fill="#f8f8f8" stroke="#8a8a8a"/><path d="M8.5 0.5V3.5H11.5" fill="none" stroke="#aaa"/><circle cx="5" cy="6.5" r="2.6" fill="none" stroke="#a0a0a0" stroke-width="1.2" stroke-dasharray="1.2 0.8"/><circle cx="5" cy="6.5" r="1" fill="#c8c8c8"/><circle cx="8" cy="10.5" r="2" fill="#cfe3f7" stroke="#6aa8e0" stroke-width="1" stroke-dasharray="1 0.6"/></svg><div class="t" style="left:1215px;top:590.84px;font-size:12px;line-height:16px;color:#000;transform:scaleX(0.9553);transform-origin:0 0;width:188px;overflow:hidden;">Qt5Svg.dll</div><svg style="left:1199px;top:607px" width="13" height="16" viewBox="0 0 13 16"><path d="M0.5 0.5H8.5L11.5 3.5V15.5H0.5Z" fill="#f8f8f8" stroke="#8a8a8a"/><path d="M8.5 0.5V3.5H11.5" fill="none" stroke="#aaa"/><circle cx="5" cy="6.5" r="2.6" fill="none" stroke="#a0a0a0" stroke-width="1.2" stroke-dasharray="1.2 0.8"/><circle cx="5" cy="6.5" r="1" fill="#c8c8c8"/><circle cx="8" cy="10.5" r="2" fill="#cfe3f7" stroke="#6aa8e0" stroke-width="1" stroke-dasharray="1 0.6"/></svg><div class="t" style="left:1215px;top:607.84px;font-size:12px;line-height:16px;color:#000;transform:scaleX(0.9663);transform-origin:0 0;width:188px;overflow:hidden;">Qt5WebChannel.dll</div><svg style="left:1199px;top:624px" width="13" height="16" viewBox="0 0 13 16"><path d="M0.5 0.5H8.5L11.5 3.5V15.5H0.5Z" fill="#f8f8f8" stroke="#8a8a8a"/><path d="M8.5 0.5V3.5H11.5" fill="none" stroke="#aaa"/><circle cx="5" cy="6.5" r="2.6" fill="none" stroke="#a0a0a0" stroke-width="1.2" stroke-dasharray="1.2 0.8"/><circle cx="5" cy="6.5" r="1" fill="#c8c8c8"/><circle cx="8" cy="10.5" r="2" fill="#cfe3f7" stroke="#6aa8e0" stroke-width="1" stroke-dasharray="1 0.6"/></svg><div class="t" style="left:1215px;top:624.84px;font-size:12px;line-height:16px;color:#000;transform:scaleX(0.9667);transform-origin:0 0;width:188px;overflow:hidden;">Qt5WebEngineCore.dll</div><svg style="left:1199px;top:641px" width="13" height="16" viewBox="0 0 13 16"><path d="M0.5 0.5H8.5L11.5 3.5V15.5H0.5Z" fill="#f8f8f8" stroke="#8a8a8a"/><path d="M8.5 0.5V3.5H11.5" fill="none" stroke="#aaa"/><circle cx="5" cy="6.5" r="2.6" fill="none" stroke="#a0a0a0" stroke-width="1.2" stroke-dasharray="1.2 0.8"/><circle cx="5" cy="6.5" r="1" fill="#c8c8c8"/><circle cx="8" cy="10.5" r="2" fill="#cfe3f7" stroke="#6aa8e0" stroke-width="1" stroke-dasharray="1 0.6"/></svg><div class="t" style="left:1215px;top:641.84px;font-size:12px;line-height:16px;color:#000;transform:scaleX(0.9690);transform-origin:0 0;width:188px;overflow:hidden;">Qt5WebEngineWidgets.dll</div><svg style="left:1199px;top:658px" width="13" height="16" viewBox="0 0 13 16"><path d="M0.5 0.5H8.5L11.5 3.5V15.5H0.5Z" fill="#f8f8f8" stroke="#8a8a8a"/><path d="M8.5 0.5V3.5H11.5" fill="none" stroke="#aaa"/><circle cx="5" cy="6.5" r="2.6" fill="none" stroke="#a0a0a0" stroke-width="1.2" stroke-dasharray="1.2 0.8"/><circle cx="5" cy="6.5" r="1" fill="#c8c8c8"/><circle cx="8" cy="10.5" r="2" fill="#cfe3f7" stroke="#6aa8e0" stroke-width="1" stroke-dasharray="1 0.6"/></svg><div class="t" style="left:1215px;top:658.84px;font-size:12px;line-height:16px;color:#000;transform:scaleX(0.9639);transform-origin:0 0;width:188px;overflow:hidden;">Qt5Widgets.dll</div><svg style="left:1198px;top:675px" width="13" height="16" viewBox="0 0 13 16"><path d="M0.5 0.5H9L12.5 4V15.5H0.5Z" fill="#fafafa" stroke="#8a8a8a"/></svg><div class="t" style="left:1215px;top:675.84px;font-size:12px;line-height:16px;color:#000;transform:scaleX(0.9824);transform-origin:0 0;width:188px;overflow:hidden;">qtwebengine_resources.pak</div><svg style="left:1198px;top:692px" width="13" height="16" viewBox="0 0 13 16"><path d="M0.5 0.5H9L12.5 4V15.5H0.5Z" fill="#fafafa" stroke="#8a8a8a"/></svg><div class="t" style="left:1215px;top:692.84px;font-size:12px;line-height:16px;color:#000;transform:scaleX(0.9721);transform-origin:0 0;width:188px;overflow:hidden;">qtwebengine_resources_100p.pak</div><svg style="left:1198px;top:709px" width="13" height="16" viewBox="0 0 13 16"><path d="M0.5 0.5H9L12.5 4V15.5H0.5Z" fill="#fafafa" stroke="#8a8a8a"/></svg><div class="t" style="left:1215px;top:709.84px;font-size:12px;line-height:16px;color:#000;transform:scaleX(0.9721);transform-origin:0 0;width:188px;overflow:hidden;">qtwebengine_resources_200p.pak</div><svg style="left:1197px;top:727px" width="16" height="14" viewBox="0 0 16 14"><rect x="0.5" y="0.5" width="15" height="13" fill="#fff" stroke="#888"/><rect x="0.5" y="0.5" width="15" height="2" fill="#aaa"/><rect x="3" y="5" width="5" height="6" fill="#1a6fd0"/><path d="M10 6H14M10 8H14M10 10H14" stroke="#888"/></svg><div class="t" style="left:1215px;top:726.84px;font-size:12px;line-height:16px;color:#000;transform:scaleX(0.9738);transform-origin:0 0;width:188px;overflow:hidden;">QtWebEngineProcess.exe</div><svg style="left:1199px;top:743px" width="13" height="16" viewBox="0 0 13 16"><path d="M0.5 0.5H8.5L11.5 3.5V15.5H0.5Z" fill="#f8f8f8" stroke="#8a8a8a"/><path d="M8.5 0.5V3.5H11.5" fill="none" stroke="#aaa"/><circle cx="5" cy="6.5" r="2.6" fill="none" stroke="#a0a0a0" stroke-width="1.2" stroke-dasharray="1.2 0.8"/><circle cx="5" cy="6.5" r="1" fill="#c8c8c8"/><circle cx="8" cy="10.5" r="2" fill="#cfe3f7" stroke="#6aa8e0" stroke-width="1" stroke-dasharray="1 0.6"/></svg><div class="t" style="left:1215px;top:743.84px;font-size:12px;line-height:16px;color:#000;transform:scaleX(0.9772);transform-origin:0 0;width:188px;overflow:hidden;">quazip.dll</div><svg style="left:1197px;top:761px" width="16" height="14" viewBox="0 0 16 14"><rect x="0.5" y="0.5" width="15" height="13" fill="#fff" stroke="#888"/><rect x="0.5" y="0.5" width="15" height="2" fill="#aaa"/><rect x="3" y="5" width="5" height="6" fill="#1a6fd0"/><path d="M10 6H14M10 8H14M10 10H14" stroke="#888"/></svg><div class="t" style="left:1215px;top:760.84px;font-size:12px;line-height:16px;color:#000;transform:scaleX(0.9728);transform-origin:0 0;width:188px;overflow:hidden;">redist_downloader_32.exe</div><svg style="left:1199px;top:777px" width="13" height="16" viewBox="0 0 13 16"><path d="M0.5 0.5H8.5L11.5 3.5V15.5H0.5Z" fill="#f8f8f8" stroke="#8a8a8a"/><path d="M8.5 0.5V3.5H11.5" fill="none" stroke="#aaa"/><circle cx="5" cy="6.5" r="2.6" fill="none" stroke="#a0a0a0" stroke-width="1.2" stroke-dasharray="1.2 0.8"/><circle cx="5" cy="6.5" r="1" fill="#c8c8c8"/><circle cx="8" cy="10.5" r="2" fill="#cfe3f7" stroke="#6aa8e0" stroke-width="1" stroke-dasharray="1 0.6"/></svg><div class="t" style="left:1215px;top:777.84px;font-size:12px;line-height:16px;color:#000;transform:scaleX(0.9577);transform-origin:0 0;width:188px;overflow:hidden;">ssleay32.dll</div><svg style="left:1197px;top:794px" width="16" height="16" viewBox="0 0 16 16"><defs><radialGradient id="ts3g" cx="0.4" cy="0.35" r="0.7"><stop offset="0" stop-color="#3a6e9e"/><stop offset="1" stop-color="#173f66"/></radialGradient></defs><circle cx="8" cy="8" r="7.6" fill="url(#ts3g)"/><path d="M3.6 9.5Q3.2 3.5 8 3.5Q12.8 3.5 12.4 9.5" stroke="#e8eef4" stroke-width="1.3" fill="none"/><ellipse cx="5" cy="9.6" rx="1.4" ry="1.1" fill="#e8eef4"/><ellipse cx="11" cy="9.6" rx="1.4" ry="1.1" fill="#e8eef4"/><path d="M11 11Q10 12.8 7.5 12.6" stroke="#e8eef4" stroke-width="1" fill="none"/></svg><div class="t" style="left:1215px;top:794.84px;font-size:12px;line-height:16px;color:#000;transform:scaleX(0.9623);transform-origin:0 0;width:188px;overflow:hidden;">ts3client_win32.exe</div><svg style="left:1197px;top:811px" width="16" height="16" viewBox="0 0 16 16"><defs><radialGradient id="ts3g" cx="0.4" cy="0.35" r="0.7"><stop offset="0" stop-color="#3a6e9e"/><stop offset="1" stop-color="#173f66"/></radialGradient></defs><circle cx="8" cy="8" r="7.6" fill="url(#ts3g)"/><path d="M3.6 9.5Q3.2 3.5 8 3.5Q12.8 3.5 12.4 9.5" stroke="#e8eef4" stroke-width="1.3" fill="none"/><ellipse cx="5" cy="9.6" rx="1.4" ry="1.1" fill="#e8eef4"/><ellipse cx="11" cy="9.6" rx="1.4" ry="1.1" fill="#e8eef4"/><path d="M11 11Q10 12.8 7.5 12.6" stroke="#e8eef4" stroke-width="1" fill="none"/><rect x="0.5" y="9.5" width="6" height="6" fill="#fff" stroke="#3a6ea5"/><path d="M2 14L5 11M3 11H5V13" stroke="#3a6ea5"/></svg><div class="t" style="left:1215px;top:811.84px;font-size:12px;line-height:16px;color:#000;transform:scaleX(0.9693);transform-origin:0 0;width:188px;overflow:hidden;">ts3client_win32.exe - Ярлык</div><svg style="left:1197px;top:828px" width="14" height="17" viewBox="0 0 14 17"><path d="M0.5 0.5H9.5L13.5 4.5V16.5H0.5Z" fill="#fafafa" stroke="#8a8a8a"/><path d="M3 6L2 7L3 8M11 6L12 7L11 8" stroke="#555" fill="none"/><circle cx="7" cy="6.5" r="1.8" fill="#2a8a4a"/><path d="M3 11.5H11M3 13.5H11" stroke="#666"/></svg><div class="t" style="left:1215px;top:828.84px;font-size:12px;line-height:16px;color:#000;transform:scaleX(0.9695);transform-origin:0 0;width:188px;overflow:hidden;">ts3client_win32.VisualElementsManifest.xml</div><div style="left:704px;top:850px;width:694px;height:16px;background:#f0f0f0;"></div><div style="left:722px;top:850px;width:330px;height:15px;background:#cdcdcd;"></div><svg style="left:710px;top:854px" width="6" height="8" viewBox="0 0 6 8"><path d="M5 0.8L1.5 4L5 7.2" stroke="#505050" stroke-width="1.9" fill="none"/></svg><svg style="left:1385px;top:854px" width="6" height="8" viewBox="0 0 6 8"><path d="M1 0.8L4.5 4L1 7.2" stroke="#505050" stroke-width="1.9" fill="none"/></svg><div style="left:704px;top:866px;width:695px;height:1px;background:#fbfbfb;"></div><div style="left:704px;top:867px;width:695px;height:22px;background:#aacbe8;"></div><svg style="left:710px;top:873px" width="10" height="10" viewBox="0 0 10 10"><path d="M9 1.5V0.5H0.8L4.6 4.8L0.8 9.2H9V8.5" stroke="#8a8a8a" stroke-width="1" fill="none"/></svg><div class="t" style="left:727px;top:869.84px;font-size:12px;line-height:16px;color:#000;transform:scaleX(0.9461);transform-origin:0 0;">54 Элемент(ов)</div><svg style="left:816px;top:876px" width="7" height="4" viewBox="0 0 7 4" shape-rendering="crispEdges"><rect x="0" y="0" width="7" height="1" fill="#222"/><rect x="1" y="1" width="5" height="1" fill="#222"/><rect x="2" y="2" width="3" height="1" fill="#222"/><rect x="3" y="3" width="1" height="1" fill="#222"/></svg><svg style="left:1378px;top:869px" width="17" height="17" viewBox="-1 -1 17 17" shape-rendering="crispEdges"><rect x="-1" y="-1" width="17" height="17" fill="#a8dcf4"/><rect width="15" height="15" fill="#ee0000"/><rect x="1" y="1" width="1" height="1" fill="#fff"/><rect x="3" y="1" width="1" height="1" fill="#fff"/><rect x="5" y="1" width="1" height="1" fill="#fff"/><rect x="7" y="1" width="1" height="1" fill="#fff"/><rect x="9" y="1" width="1" height="1" fill="#fff"/><rect x="11" y="1" width="1" height="1" fill="#fff"/><rect x="13" y="1" width="1" height="1" fill="#fff"/><rect x="1" y="3" width="1" height="1" fill="#fff"/><rect x="3" y="3" width="1" height="1" fill="#000"/><rect x="5" y="3" width="1" height="1" fill="#000"/><rect x="7" y="3" width="1" height="1" fill="#000"/><rect x="9" y="3" width="1" height="1" fill="#000"/><rect x="11" y="3" width="1" height="1" fill="#000"/><rect x="13" y="3" width="1" height="1" fill="#fff"/><rect x="1" y="5" width="1" height="1" fill="#fff"/><rect x="3" y="5" width="1" height="1" fill="#000"/><rect x="5" y="5" width="1" height="1" fill="#fff"/><rect x="7" y="5" width="1" height="1" fill="#fff"/><rect x="9" y="5" width="1" height="1" fill="#fff"/><rect x="11" y="5" width="1" height="1" fill="#000"/><rect x="13" y="5" width="1" height="1" fill="#fff"/><rect x="1" y="7" width="1" height="1" fill="#fff"/><rect x="3" y="7" width="1" height="1" fill="#000"/><rect x="5" y="7" width="1" height="1" fill="#fff"/><rect x="7" y="7" width="1" height="1" fill="#fff"/><rect x="9" y="7" width="1" height="1" fill="#fff"/><rect x="11" y="7" width="1" height="1" fill="#000"/><rect x="13" y="7" width="1" height="1" fill="#fff"/><rect x="1" y="9" width="1" height="1" fill="#fff"/><rect x="3" y="9" width="1" height="1" fill="#000"/><rect x="5" y="9" width="1" height="1" fill="#fff"/><rect x="7" y="9" width="1" height="1" fill="#fff"/><rect x="9" y="9" width="1" height="1" fill="#000"/><rect x="11" y="9" width="1" height="1" fill="#000"/><rect x="13" y="9" width="1" height="1" fill="#fff"/><rect x="1" y="11" width="1" height="1" fill="#fff"/><rect x="3" y="11" width="1" height="1" fill="#000"/><rect x="5" y="11" width="1" height="1" fill="#000"/><rect x="7" y="11" width="1" height="1" fill="#000"/><rect x="9" y="11" width="1" height="1" fill="#000"/><rect x="11" y="11" width="1" height="1" fill="#000"/><rect x="13" y="11" width="1" height="1" fill="#fff"/><rect x="1" y="13" width="1" height="1" fill="#fff"/><rect x="3" y="13" width="1" height="1" fill="#fff"/><rect x="5" y="13" width="1" height="1" fill="#fff"/><rect x="7" y="13" width="1" height="1" fill="#fff"/><rect x="9" y="13" width="1" height="1" fill="#fff"/><rect x="11" y="13" width="1" height="1" fill="#fff"/><rect x="13" y="13" width="1" height="1" fill="#000"/></svg><svg style="left:1356px;top:870px" width="17" height="16" viewBox="0 0 17 16"><path d="M3.5 10.5L12 2L15 5L6.5 13.5L3 14Z" fill="#fff" stroke="#000" stroke-width="1.3"/><path d="M6 10L10.5 5.5" stroke="#2a6ae0" stroke-width="1.8"/><path d="M10.5 5.5L12.5 3.5" stroke="#e22" stroke-width="1.8"/><path d="M5 11.5L6 10.5" stroke="#2a2" stroke-width="1.5"/><rect x="0" y="11" width="16" height="5" fill="#aaa"/><path d="M1.5 12.5H3.5M5.5 12.5H7.5M11.5 12.5H13.5M1.5 14.5H3.5M5.5 14.5H7.5M11.5 14.5H13.5" stroke="#fff"/></svg><div style="left:1347px;top:869px;width:1px;height:18px;background:#777;"></div><svg style="left:1326px;top:870px" width="14" height="15" viewBox="0 0 14 15"><rect x="1" y="2" width="12" height="12.5" fill="#fff" stroke="#7a4a1a" stroke-width="1.6"/><rect x="4" y="0.5" width="6" height="3" fill="#888"/><path d="M3.5 6.5H10.5M3.5 8.5H10.5M3.5 10.5H10.5M3.5 12.5H10.5" stroke="#5a8ad0"/></svg><svg style="left:1303px;top:870px" width="15" height="17" viewBox="0 0 15 17"><path d="M0.5 0.5H6.5L9.5 3.5V11.5H0.5Z" fill="#fff" stroke="#999"/><path d="M2 4.5H6M2 6.5H7M2 8.5H7" stroke="#5a8ad0"/><path d="M5.5 5.5H11.5L14.5 8.5V16.5H5.5Z" fill="#fff" stroke="#999"/><path d="M7 10.5H13M7 12.5H13M7 14.5H13" stroke="#3a7ad0"/></svg><svg style="left:1282px;top:870px" width="12" height="17" viewBox="0 0 12 17"><path d="M2.5 0L7 11M9.5 0L5 11" stroke="#8a8a8a" stroke-width="1.3"/><circle cx="3.2" cy="13.3" r="2.4" fill="none" stroke="#1e7fd8" stroke-width="1.5"/><circle cx="8.8" cy="13.3" r="2.4" fill="none" stroke="#1e7fd8" stroke-width="1.5"/></svg><div style="left:1271px;top:869px;width:1px;height:18px;background:#777;"></div><svg style="left:1250px;top:872px" width="14" height="13" viewBox="0 0 14 13"><path d="M1.5 1L12.5 12M12.5 1L1.5 12" stroke="#d81b1b" stroke-width="3.2"/></svg><svg style="left:1225px;top:873px" width="17" height="11" viewBox="0 0 17 11"><rect x="0.5" y="0.5" width="15.5" height="9.5" fill="#f8f8f8" stroke="#9a9a9a"/><path d="M2.5 3.5H7.5M5 6.5H12" stroke="#9a9a9a"/><rect x="12" y="2" width="2" height="2" fill="#3a8ad8"/></svg><svg style="left:1203px;top:870px" width="14" height="17" viewBox="0 0 14 17"><path d="M5.5 1.5H12.5L9.5 5H12L7 10H9.5L3 16L4.5 11H1.5L5 7H2Z" fill="#999" transform="translate(1 0.7)"/><path d="M5.5 1.5H12.5L9.5 5H12L7 10H9.5L3 16L4.5 11H1.5L5 7H2Z" fill="#fff" stroke="#000" stroke-width="1.3" stroke-linejoin="round"/></svg><div style="left:1px;top:889px;width:1399px;height:1px;background:#fbfbfb;"></div><div style="left:1px;top:890px;width:1399px;height:23px;background:#f0f0f0;"></div><div class="t" style="left:2px;top:894.84px;font-size:12px;line-height:16px;color:#000;transform:scaleX(0.9461);transform-origin:0 0;">54 Элемент(ов)</div><div style="left:838px;top:892px;width:1px;height:20px;background:#d0d0d0;"></div><div style="left:908px;top:892px;width:1px;height:20px;background:#d0d0d0;"></div><div style="left:1058px;top:892px;width:1px;height:20px;background:#d0d0d0;"></div><div style="left:1198px;top:892px;width:1px;height:20px;background:#d0d0d0;"></div><svg style="left:844px;top:894px" width="15" height="16" viewBox="0 0 15 16"><defs><radialGradient id="globeg" cx="0.35" cy="0.3" r="0.75"><stop offset="0" stop-color="#9ad8ff"/><stop offset="0.7" stop-color="#1a78d8"/><stop offset="1" stop-color="#0a4a9a"/></radialGradient></defs><circle cx="7" cy="7.5" r="6.8" fill="url(#globeg)"/><path d="M2.5 3.5Q5 0.8 8.5 1.2L9.5 3L7 5L4.5 4.5L3 6Z" fill="#2fa82f"/><path d="M10.5 2.5Q13.5 4.5 13.6 8L12 10L10.5 7.5L11.5 5Z" fill="#1f8f2a"/><path d="M5.5 7.5Q7.5 5.5 9.5 7.5L10.5 12Q10 15.5 7.5 15.5Q4.5 15.5 4.5 12Z" fill="#f2f2f2" stroke="#8a8a8a" stroke-width="0.7"/><path d="M7.5 6.5V9" stroke="#6a6aa0" stroke-width="1"/></svg><div class="t" style="left:863px;top:894.84px;font-size:12px;line-height:16px;color:#000;transform:scaleX(0.8834);transform-origin:0 0;">8.01</div><svg style="left:913px;top:894px" width="14" height="16" viewBox="0 0 14 16"><path d="M7 0.5L13.5 3V8Q13.5 13 7 15.5Q0.5 13 0.5 8V3Z" fill="#f4e04a" stroke="#3a5a9a"/><rect x="6.2" y="4" width="1.6" height="6" fill="#222"/><rect x="6.2" y="11" width="1.6" height="1.6" fill="#222"/></svg><div class="t" style="left:933px;top:894.84px;font-size:12px;line-height:16px;color:#000;transform:scaleX(0.9850);transform-origin:0 0;width:125px;overflow:hidden;">admin (Портативная версия)</div><svg style="left:1065px;top:894px" width="14" height="16" viewBox="0 0 14 16"><path d="M0.5 0.5H12.5V9.5H13.5V15.5H0.5Z" fill="#fde39a" stroke="#e8c35a"/><path d="M10.5 9.5H12.5V15.5H10.5Z" fill="#fde39a" stroke="#e8c35a"/></svg><div class="t" style="left:1084px;top:894.84px;font-size:12px;line-height:16px;color:#000;transform:scaleX(0.9312);transform-origin:0 0;">TeamSpeak 3 Client</div><div class="t" style="left:1203px;top:894.84px;font-size:12px;line-height:16px;color:#000;transform:scaleX(0.9571);transform-origin:0 0;">Свободно: 161 ГБ из 698 ГБ</div><div style="left:1395px;top:909px;width:2px;height:2px;background:#b0b0b0;"></div><div style="left:1395px;top:906px;width:2px;height:2px;background:#b0b0b0;"></div><div style="left:1395px;top:903px;width:2px;height:2px;background:#b0b0b0;"></div><div style="left:1392px;top:909px;width:2px;height:2px;background:#b0b0b0;"></div><div style="left:1392px;top:906px;width:2px;height:2px;background:#b0b0b0;"></div><div style="left:1389px;top:909px;width:2px;height:2px;background:#b0b0b0;"></div><div style="left:352px;top:227px;width:697px;height:464px;box-shadow:1px 4px 18px rgba(0,0,0,0.32);"></div><div style="left:352px;top:227px;width:697px;height:464px;background:#f0f0f0;border:1px solid #6e6e6e;box-sizing:border-box;"></div><div style="left:353px;top:228px;width:695px;height:25px;background:#fff;"></div><div class="t" style="left:356px;top:232.84px;font-size:12px;line-height:16px;color:#000;transform:scaleX(1.0120);transform-origin:0 0;">Дополнительные настройки</div><svg style="left:1028px;top:235px" width="11" height="11" viewBox="0 0 11 11"><path d="M0.5 0.5L10.5 10.5M10.5 0.5L0.5 10.5" stroke="#111" stroke-width="1.1"/></svg><div style="left:361px;top:262px;width:163px;height:20px;background:#f0f0f0;border:1px solid #d9d9d9;box-sizing:border-box;"></div><div class="t" style="left:422px;top:265.69px;font-size:11px;line-height:15px;color:#000;">Программы</div><div style="left:523px;top:262px;width:186px;height:20px;background:#f0f0f0;border:1px solid #d9d9d9;box-sizing:border-box;"></div><div class="t" style="left:585px;top:265.69px;font-size:11px;line-height:15px;color:#000;">Быстрый доступ</div><div style="left:708px;top:262px;width:163px;height:20px;background:#f0f0f0;border:1px solid #d9d9d9;box-sizing:border-box;"></div><div class="t" style="left:770px;top:265.69px;font-size:11px;line-height:15px;color:#000;">Ассоциации</div><div style="left:870px;top:262px;width:168px;height:20px;background:#f0f0f0;border:1px solid #d9d9d9;box-sizing:border-box;"></div><div class="t" style="left:931px;top:265.69px;font-size:11px;line-height:15px;color:#000;">О программе</div><div style="left:359px;top:300px;width:681px;height:353px;background:#fff;border:1px solid #d9d9d9;box-sizing:border-box;"></div><div style="left:523px;top:281px;width:139px;height:20px;background:#f0f0f0;border:1px solid #d9d9d9;box-sizing:border-box;"></div><div class="t" style="left:587px;top:284.69px;font-size:11px;line-height:15px;color:#000;">Цвета</div><div style="left:661px;top:281px;width:231px;height:20px;background:#f0f0f0;border:1px solid #d9d9d9;box-sizing:border-box;"></div><div class="t" style="left:726px;top:284.69px;font-size:11px;line-height:15px;color:#000;">Столбцы/Дерево папок</div><div style="left:891px;top:281px;width:147px;height:20px;background:#f0f0f0;border:1px solid #d9d9d9;box-sizing:border-box;"></div><div class="t" style="left:958px;top:284.69px;font-size:11px;line-height:15px;color:#000;">Фильтр</div><div style="left:359px;top:279px;width:165px;height:23px;background:#fff;border:1px solid #d9d9d9;box-sizing:border-box;border-bottom:none;"></div><div class="t" style="left:426px;top:282.69px;font-size:11px;line-height:15px;color:#000;">Основные</div><svg style="left:401px;top:263px" width="15" height="17" viewBox="0 0 15 17"><path d="M5.5 1.5H13.5L10 5H12.5L7 10H9.5L3 16L4.5 11H1.5L5 7H2Z" fill="#bdbdbd" stroke="#111" stroke-width="1.3" stroke-linejoin="round"/></svg><svg style="left:411px;top:283px" width="2" height="13" viewBox="0 0 2 13" shape-rendering="crispEdges"><rect x="0" y="0" width="2" height="2" fill="#000"/><rect x="0" y="3" width="2" height="10" fill="#000"/></svg><svg style="left:564px;top:264px" width="15" height="15" viewBox="0 0 15 15"><rect width="15" height="15" fill="#8a8a8a"/><rect x="1" y="1" width="1" height="1" fill="#bbb"/><rect x="3" y="1" width="1" height="1" fill="#bbb"/><rect x="5" y="1" width="1" height="1" fill="#bbb"/><rect x="7" y="1" width="1" height="1" fill="#bbb"/><rect x="9" y="1" width="1" height="1" fill="#bbb"/><rect x="11" y="1" width="1" height="1" fill="#bbb"/><rect x="13" y="1" width="1" height="1" fill="#bbb"/><rect x="1" y="3" width="1" height="1" fill="#bbb"/><rect x="3" y="3" width="1" height="1" fill="#222"/><rect x="5" y="3" width="1" height="1" fill="#222"/><rect x="7" y="3" width="1" height="1" fill="#222"/><rect x="9" y="3" width="1" height="1" fill="#222"/><rect x="11" y="3" width="1" height="1" fill="#222"/><rect x="13" y="3" width="1" height="1" fill="#bbb"/><rect x="1" y="5" width="1" height="1" fill="#bbb"/><rect x="3" y="5" width="1" height="1" fill="#222"/><rect x="5" y="5" width="1" height="1" fill="#bbb"/><rect x="7" y="5" width="1" height="1" fill="#bbb"/><rect x="9" y="5" width="1" height="1" fill="#bbb"/><rect x="11" y="5" width="1" height="1" fill="#222"/><rect x="13" y="5" width="1" height="1" fill="#bbb"/><rect x="1" y="7" width="1" height="1" fill="#bbb"/><rect x="3" y="7" width="1" height="1" fill="#222"/><rect x="5" y="7" width="1" height="1" fill="#bbb"/><rect x="7" y="7" width="1" height="1" fill="#bbb"/><rect x="9" y="7" width="1" height="1" fill="#bbb"/><rect x="11" y="7" width="1" height="1" fill="#222"/><rect x="13" y="7" width="1" height="1" fill="#bbb"/><rect x="1" y="9" width="1" height="1" fill="#bbb"/><rect x="3" y="9" width="1" height="1" fill="#222"/><rect x="5" y="9" width="1" height="1" fill="#bbb"/><rect x="7" y="9" width="1" height="1" fill="#bbb"/><rect x="9" y="9" width="1" height="1" fill="#bbb"/><rect x="11" y="9" width="1" height="1" fill="#222"/><rect x="13" y="9" width="1" height="1" fill="#bbb"/><rect x="1" y="11" width="1" height="1" fill="#bbb"/><rect x="3" y="11" width="1" height="1" fill="#222"/><rect x="5" y="11" width="1" height="1" fill="#222"/><rect x="7" y="11" width="1" height="1" fill="#222"/><rect x="9" y="11" width="1" height="1" fill="#222"/><rect x="11" y="11" width="1" height="1" fill="#222"/><rect x="13" y="11" width="1" height="1" fill="#bbb"/><rect x="1" y="13" width="1" height="1" fill="#bbb"/><rect x="3" y="13" width="1" height="1" fill="#bbb"/><rect x="5" y="13" width="1" height="1" fill="#bbb"/><rect x="7" y="13" width="1" height="1" fill="#bbb"/><rect x="9" y="13" width="1" height="1" fill="#bbb"/><rect x="11" y="13" width="1" height="1" fill="#bbb"/><rect x="13" y="13" width="1" height="1" fill="#bbb"/></svg><svg style="left:910px;top:264px" width="15" height="15" viewBox="0 0 15 15"><rect width="15" height="15" fill="#e00000"/><rect x="1" y="1" width="1" height="1" fill="#fff"/><rect x="3" y="1" width="1" height="1" fill="#fff"/><rect x="5" y="1" width="1" height="1" fill="#fff"/><rect x="7" y="1" width="1" height="1" fill="#fff"/><rect x="9" y="1" width="1" height="1" fill="#fff"/><rect x="11" y="1" width="1" height="1" fill="#fff"/><rect x="13" y="1" width="1" height="1" fill="#fff"/><rect x="1" y="3" width="1" height="1" fill="#fff"/><rect x="3" y="3" width="1" height="1" fill="#000"/><rect x="5" y="3" width="1" height="1" fill="#000"/><rect x="7" y="3" width="1" height="1" fill="#000"/><rect x="9" y="3" width="1" height="1" fill="#000"/><rect x="11" y="3" width="1" height="1" fill="#000"/><rect x="13" y="3" width="1" height="1" fill="#fff"/><rect x="1" y="5" width="1" height="1" fill="#fff"/><rect x="3" y="5" width="1" height="1" fill="#000"/><rect x="5" y="5" width="1" height="1" fill="#fff"/><rect x="7" y="5" width="1" height="1" fill="#fff"/><rect x="9" y="5" width="1" height="1" fill="#fff"/><rect x="11" y="5" width="1" height="1" fill="#000"/><rect x="13" y="5" width="1" height="1" fill="#fff"/><rect x="1" y="7" width="1" height="1" fill="#fff"/><rect x="3" y="7" width="1" height="1" fill="#000"/><rect x="5" y="7" width="1" height="1" fill="#fff"/><rect x="7" y="7" width="1" height="1" fill="#fff"/><rect x="9" y="7" width="1" height="1" fill="#fff"/><rect x="11" y="7" width="1" height="1" fill="#000"/><rect x="13" y="7" width="1" height="1" fill="#fff"/><rect x="1" y="9" width="1" height="1" fill="#fff"/><rect x="3" y="9" width="1" height="1" fill="#000"/><rect x="5" y="9" width="1" height="1" fill="#fff"/><rect x="7" y="9" width="1" height="1" fill="#fff"/><rect x="9" y="9" width="1" height="1" fill="#fff"/><rect x="11" y="9" width="1" height="1" fill="#000"/><rect x="13" y="9" width="1" height="1" fill="#fff"/><rect x="1" y="11" width="1" height="1" fill="#fff"/><rect x="3" y="11" width="1" height="1" fill="#000"/><rect x="5" y="11" width="1" height="1" fill="#000"/><rect x="7" y="11" width="1" height="1" fill="#000"/><rect x="9" y="11" width="1" height="1" fill="#000"/><rect x="11" y="11" width="1" height="1" fill="#000"/><rect x="13" y="11" width="1" height="1" fill="#fff"/><rect x="1" y="13" width="1" height="1" fill="#fff"/><rect x="3" y="13" width="1" height="1" fill="#fff"/><rect x="5" y="13" width="1" height="1" fill="#fff"/><rect x="7" y="13" width="1" height="1" fill="#fff"/><rect x="9" y="13" width="1" height="1" fill="#fff"/><rect x="11" y="13" width="1" height="1" fill="#fff"/><rect x="13" y="13" width="1" height="1" fill="#fff"/></svg><svg style="left:745px;top:264px" width="16" height="17" viewBox="0 0 16 17"><path d="M10 0.5L3 8H8L4 16.5L13 7H8.5L13.5 0.5Z" fill="#888" stroke="#111" stroke-width="1.2"/><rect x="1" y="11" width="14" height="5" fill="#aaa" opacity="0.7"/></svg><svg style="left:567px;top:285px" width="12" height="12" viewBox="0 0 12 12"><rect x="0" y="0" width="2" height="2" fill="#800000"/><rect x="3" y="0" width="2" height="2" fill="#ff0000"/><rect x="6" y="0" width="2" height="2" fill="#808000"/><rect x="9" y="0" width="2" height="2" fill="#ffff00"/><rect x="0" y="3" width="2" height="2" fill="#008000"/><rect x="3" y="3" width="2" height="2" fill="#00ff00"/><rect x="6" y="3" width="2" height="2" fill="#008080"/><rect x="9" y="3" width="2" height="2" fill="#00ffff"/><rect x="0" y="6" width="2" height="2" fill="#000080"/><rect x="3" y="6" width="2" height="2" fill="#0000ff"/><rect x="6" y="6" width="2" height="2" fill="#800080"/><rect x="9" y="6" width="2" height="2" fill="#ff00ff"/><rect x="0" y="9" width="2" height="2" fill="#000"/><rect x="3" y="9" width="2" height="2" fill="#808080"/><rect x="6" y="9" width="2" height="2" fill="#fff"/><rect x="9" y="9" width="2" height="2" fill="#fff"/></svg><svg style="left:705px;top:283px" width="16" height="16" viewBox="0 0 16 16"><rect x="0.5" y="0.5" width="14" height="15" fill="#fff" stroke="#000"/><path d="M0.5 3.5H14.5M0.5 6.5H14.5M0.5 9.5H14.5M0.5 12.5H14.5M5.5 0.5V15.5M10.5 0.5V15.5" stroke="#000"/></svg><svg style="left:934px;top:282px" width="17" height="17" viewBox="0 0 17 17"><path d="M3 11L12 2L15 5L6 14Z" fill="#fff" stroke="#000" stroke-width="1.2"/><path d="M5 11L11 5" stroke="#2a6ae0" stroke-width="2"/><path d="M12 4L13 5" stroke="#e22" stroke-width="2"/><rect x="0" y="12" width="16" height="5" fill="#aaa"/></svg><div style="left:374px;top:318px;width:231px;height:74px;border:1px solid #dcdcdc;box-sizing:border-box;"></div><div style="left:380px;top:312px;width:39px;height:12px;background:#fff;"></div><div class="t" style="left:383px;top:310.69px;font-size:11px;line-height:15px;color:#000;transform:scaleX(0.9872);transform-origin:0 0;"># Q-Dir</div><svg style="left:386px;top:330px" width="13" height="13" viewBox="0 0 13 13"><rect x="0.5" y="0.5" width="12" height="12" fill="#fff" stroke="#333"/><path d="M2.5 6.5L5 9L10.5 3.5" stroke="#333" stroke-width="1.1" fill="none"/></svg><div class="t" style="left:402px;top:328.69px;font-size:11px;line-height:15px;color:#000;transform:scaleX(0.9646);transform-origin:0 0;">Стиль по умолчанию</div><svg style="left:386px;top:349px" width="13" height="13" viewBox="0 0 13 13"><rect x="0.5" y="0.5" width="12" height="12" fill="#fff" stroke="#333"/></svg><div class="t" style="left:402px;top:347.69px;font-size:11px;line-height:15px;color:#000;transform:scaleX(1.0005);transform-origin:0 0;">Добавить Q-Dir в контекстное меню</div><div style="left:381px;top:369px;width:216px;height:18px;background:#e5f1fb;border:1px solid #cce4f7;box-sizing:border-box;"></div><svg style="left:385px;top:374px" width="9" height="8" viewBox="0 0 9 8"><path d="M0.8 4.2L3.2 6.8L8.3 0.8" stroke="#000" stroke-width="2" fill="none"/></svg><div class="t" style="left:398px;top:371.69px;font-size:11px;line-height:15px;color:#000;transform:scaleX(0.9679);transform-origin:0 0;">По умолчанию</div><svg style="left:585px;top:377px" width="7" height="4" viewBox="0 0 7 4" shape-rendering="crispEdges"><rect x="0" y="0" width="7" height="1" fill="#222"/><rect x="1" y="1" width="5" height="1" fill="#222"/><rect x="2" y="2" width="3" height="1" fill="#222"/><rect x="3" y="3" width="1" height="1" fill="#222"/></svg><div style="left:614px;top:318px;width:297px;height:73px;border:1px solid #dcdcdc;box-sizing:border-box;"></div><div style="left:620px;top:312px;width:47px;height:12px;background:#fff;"></div><div class="t" style="left:623px;top:310.69px;font-size:11px;line-height:15px;color:#000;transform:scaleX(0.9376);transform-origin:0 0;"># System</div><svg style="left:624px;top:330px" width="13" height="13" viewBox="0 0 13 13"><rect x="0.5" y="0.5" width="12" height="12" fill="#fff" stroke="#333"/><path d="M2.5 6.5L5 9L10.5 3.5" stroke="#333" stroke-width="1.1" fill="none"/></svg><div class="t" style="left:640px;top:328.69px;font-size:11px;line-height:15px;color:#000;transform:scaleX(1.0119);transform-origin:0 0;">Показывать скрытые файлы и папки</div><svg style="left:624px;top:348px" width="13" height="13" viewBox="0 0 13 13"><rect x="0.5" y="0.5" width="12" height="12" fill="#fff" stroke="#333"/></svg><div class="t" style="left:640px;top:346.69px;font-size:11px;line-height:15px;color:#000;transform:scaleX(0.9911);transform-origin:0 0;">Скрывать известные расширения файлов</div><div class="t" style="left:624px;top:365.69px;font-size:11px;line-height:15px;color:#0000ff;text-decoration:underline;">Параметры папок(Windows)</div><div style="left:374px;top:402px;width:233px;height:73px;border:1px solid #dcdcdc;box-sizing:border-box;"></div><div style="left:380px;top:396px;width:100px;height:12px;background:#fff;"></div><div class="t" style="left:383px;top:394.69px;font-size:11px;line-height:15px;color:#000;transform:scaleX(1.0018);transform-origin:0 0;"># Адресная строка</div><svg style="left:383px;top:418px" width="13" height="13" viewBox="0 0 13 13"><rect x="0.5" y="0.5" width="12" height="12" fill="#fff" stroke="#333"/><path d="M2.5 6.5L5 9L10.5 3.5" stroke="#333" stroke-width="1.1" fill="none"/></svg><div class="t" style="left:399px;top:417.69px;font-size:11px;line-height:15px;color:#000;transform:scaleX(0.9836);transform-origin:0 0;">Кнопка отображения трея</div><svg style="left:383px;top:436px" width="13" height="13" viewBox="0 0 13 13"><rect x="0.5" y="0.5" width="12" height="12" fill="#fff" stroke="#333"/><path d="M2.5 6.5L5 9L10.5 3.5" stroke="#333" stroke-width="1.1" fill="none"/></svg><div class="t" style="left:399px;top:435.69px;font-size:11px;line-height:15px;color:#000;transform:scaleX(0.9850);transform-origin:0 0;">Выпадающий список</div><div style="left:614px;top:402px;width:297px;height:73px;border:1px solid #dcdcdc;box-sizing:border-box;"></div><div style="left:620px;top:396px;width:144px;height:12px;background:#fff;"></div><div class="t" style="left:623px;top:394.69px;font-size:11px;line-height:15px;color:#000;transform:scaleX(1.0079);transform-origin:0 0;"># Навигация вперёд, назад</div><svg style="left:624px;top:419px" width="13" height="13" viewBox="0 0 13 13"><rect x="0.5" y="0.5" width="12" height="12" fill="#fff" stroke="#333"/><path d="M2.5 6.5L5 9L10.5 3.5" stroke="#333" stroke-width="1.1" fill="none"/></svg><div class="t" style="left:640px;top:417.69px;font-size:11px;line-height:15px;color:#000;transform:scaleX(0.9850);transform-origin:0 0;">Сохранять выделенное</div><svg style="left:624px;top:437px" width="13" height="13" viewBox="0 0 13 13"><rect x="0.5" y="0.5" width="12" height="12" fill="#fff" stroke="#333"/><path d="M2.5 6.5L5 9L10.5 3.5" stroke="#333" stroke-width="1.1" fill="none"/></svg><div class="t" style="left:640px;top:435.69px;font-size:11px;line-height:15px;color:#000;transform:scaleX(0.9850);transform-origin:0 0;">Помнить параметры каждой папки</div><div class="t" style="left:624px;top:452.69px;font-size:11px;line-height:15px;color:#0000ff;text-decoration:underline;">... Как в Проводнике</div><div style="left:374px;top:486px;width:536px;height:73px;border:1px solid #dcdcdc;box-sizing:border-box;"></div><div style="left:380px;top:480px;width:263px;height:12px;background:#fff;"></div><div class="t" style="left:383px;top:478.69px;font-size:11px;line-height:15px;color:#000;transform:scaleX(1.0200);transform-origin:0 0;"># Просмотр / Фильтр папок (только для zip, cab,,,)</div><div style="left:384px;top:497px;width:435px;height:23px;background:#fff;border:1px solid #7a7a7a;box-sizing:border-box;"></div><div class="t" style="left:387px;top:498.69px;font-size:11px;line-height:15px;color:#000;">*:</div><div style="left:831px;top:498px;width:27px;height:21px;background:#e1e1e1;border:1px solid #adadad;box-sizing:border-box;"></div><div class="t" style="left:834px;top:501.69px;font-size:11px;line-height:15px;color:#000;transform:scaleX(1.0402);transform-origin:0 0;">Def.</div><div style="left:384px;top:531px;width:435px;height:23px;background:#fff;border:1px solid #7a7a7a;box-sizing:border-box;"></div><div style="left:831px;top:531px;width:27px;height:21px;background:#e1e1e1;border:1px solid #adadad;box-sizing:border-box;"></div><div class="t" style="left:834px;top:534.69px;font-size:11px;line-height:15px;color:#000;transform:scaleX(1.0402);transform-origin:0 0;">Def.</div><div style="left:374px;top:574px;width:527px;height:46px;border:1px solid #dcdcdc;box-sizing:border-box;"></div><div style="left:380px;top:568px;width:151px;height:12px;background:#fff;"></div><div class="t" style="left:383px;top:566.69px;font-size:11px;line-height:15px;color:#000;transform:scaleX(0.9819);transform-origin:0 0;"># Найти папку или файл    F3</div><div style="left:384px;top:586px;width:435px;height:23px;background:#fff;border:1px solid #7a7a7a;box-sizing:border-box;"></div><div style="left:831px;top:586px;width:27px;height:21px;background:#e1e1e1;border:1px solid #adadad;box-sizing:border-box;"></div><div class="t" style="left:834px;top:589.69px;font-size:11px;line-height:15px;color:#000;transform:scaleX(1.0402);transform-origin:0 0;">Def.</div><div style="left:887px;top:661px;width:73px;height:21px;background:#e1e1e1;border:2px solid #0078d7;box-sizing:border-box;"></div><div class="t" style="left:916px;top:664.69px;font-size:11px;line-height:15px;color:#000;transform:scaleX(0.9430);transform-origin:0 0;">OK</div><div style="left:968px;top:661px;width:73px;height:21px;background:#e1e1e1;border:1px solid #adadad;box-sizing:border-box;"></div><div class="t" style="left:984px;top:664.69px;font-size:11px;line-height:15px;color:#000;transform:scaleX(0.9881);transform-origin:0 0;">Отмена</div></body></html>
